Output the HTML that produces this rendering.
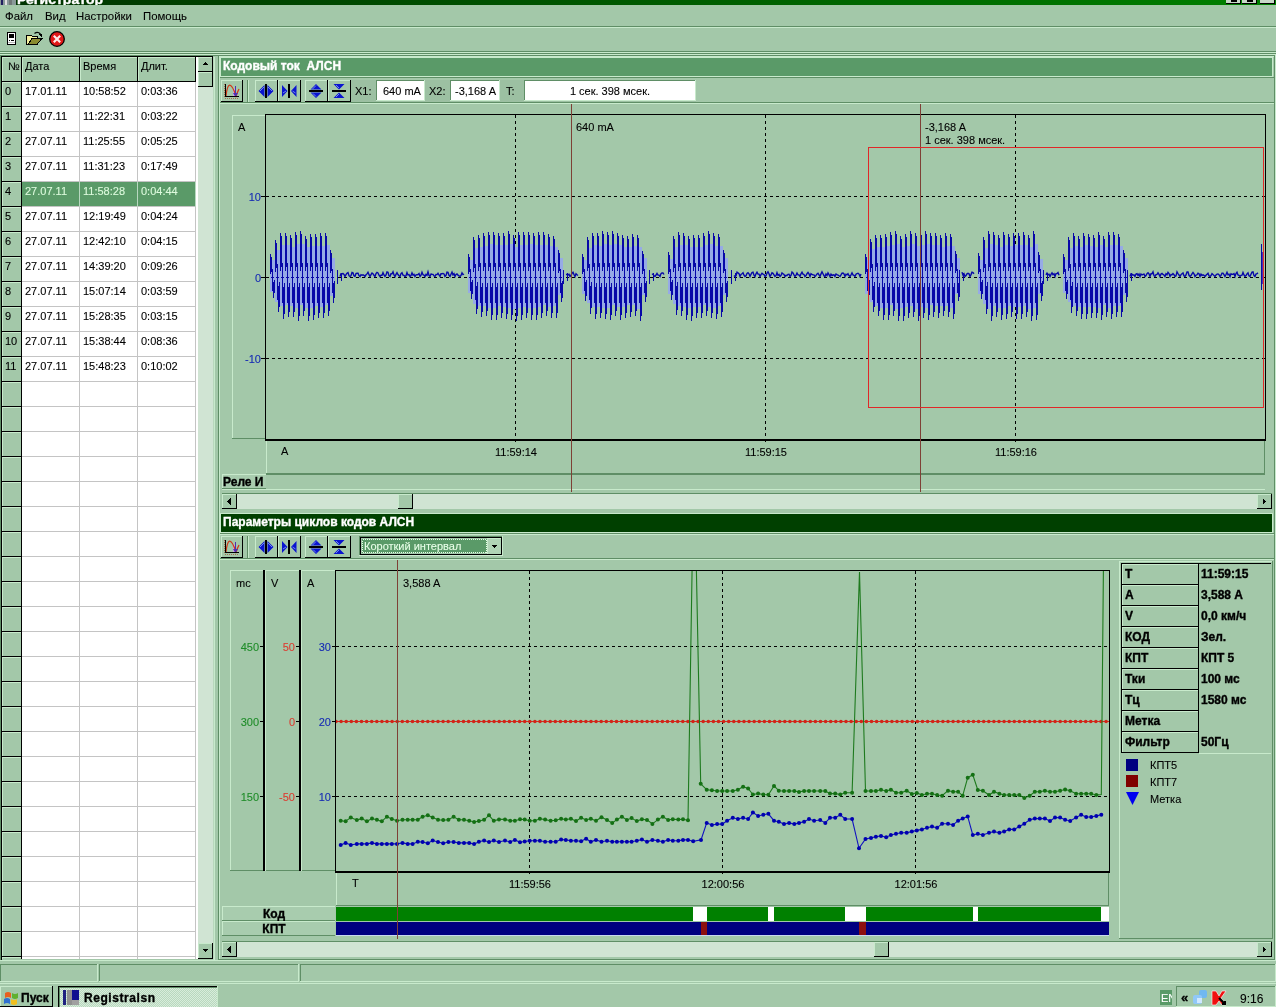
<!DOCTYPE html><html><head><meta charset="utf-8"><style>html,body{margin:0;padding:0;background:#A3C8A9;overflow:hidden}svg{display:block;will-change:transform}text{font-family:"Liberation Sans",sans-serif;white-space:pre}</style></head><body><svg width="1276" height="1007" viewBox="0 0 1276 1007" shape-rendering="crispEdges"><rect x="0" y="0" width="1276" height="1007" fill="#A3C8A9"/>
<defs><linearGradient id="tg" x1="0" x2="1" y1="0" y2="0"><stop offset="0" stop-color="#003400"/><stop offset="1" stop-color="#008000"/></linearGradient></defs>
<rect x="0" y="0" width="1276" height="5" fill="url(#tg)"/>
<svg x="0" y="0" width="1276" height="5" overflow="hidden">
<text x="17" y="3.5" font-size="13" font-weight="700" fill="#fff" stroke="#fff" stroke-width="0.35" text-anchor="start" textLength="86" lengthAdjust="spacingAndGlyphs">Регистратор</text>
</svg>
<rect x="0" y="0" width="16" height="5" fill="#8a9a9a"/>
<rect x="1" y="0" width="2" height="5" fill="#202060"/>
<rect x="5" y="0" width="2" height="5" fill="#e0e0e0"/>
<rect x="9" y="0" width="3" height="5" fill="#707878"/>
<rect x="1226" y="0" width="15" height="3" fill="#C8D8C8"/>
<rect x="1226" y="3" width="15" height="1" fill="#000"/>
<rect x="1240" y="0" width="1" height="4" fill="#000"/>
<rect x="1242" y="0" width="15" height="3" fill="#C8D8C8"/>
<rect x="1242" y="3" width="15" height="1" fill="#000"/>
<rect x="1256" y="0" width="1" height="4" fill="#000"/>
<rect x="1260" y="0" width="15" height="3" fill="#C8D8C8"/>
<rect x="1260" y="3" width="15" height="1" fill="#000"/>
<rect x="1274" y="0" width="1" height="4" fill="#000"/>
<rect x="1231" y="0" width="6" height="2" fill="#000"/>
<rect x="1247" y="0" width="6" height="2" fill="#000"/>
<text x="5" y="20" font-size="11.4" font-weight="400" fill="#000" stroke="#000" stroke-width="0.1" text-anchor="start" >Файл</text>
<text x="45" y="20" font-size="11.4" font-weight="400" fill="#000" stroke="#000" stroke-width="0.1" text-anchor="start" >Вид</text>
<text x="76" y="20" font-size="11.4" font-weight="400" fill="#000" stroke="#000" stroke-width="0.1" text-anchor="start" >Настройки</text>
<text x="143" y="20" font-size="11.4" font-weight="400" fill="#000" stroke="#000" stroke-width="0.1" text-anchor="start" >Помощь</text>
<rect x="0" y="26" width="1276" height="1" fill="#5F8E66"/>
<rect x="0" y="27" width="1276" height="1" fill="#C8EACC"/>
<rect x="7" y="32" width="9" height="13" fill="#000"/>
<rect x="8" y="33" width="7" height="11" fill="#fff"/>
<rect x="9" y="34" width="5" height="4" fill="#000"/>
<rect x="9" y="40" width="1" height="1" fill="#000"/>
<rect x="11" y="40" width="3" height="1" fill="#000"/>
<rect x="8" y="42" width="7" height="1" fill="#bbb"/>
<path d="M26.5 35.5 h5 l1 1 h5 v2 h4 l-5 6 h-10 z" fill="#F4F0A0" stroke="#000" stroke-width="1"/>
<path d="M28 44.5 l4 -6 h10 l-5 6 z" fill="#8A8A30" stroke="#000" stroke-width="1"/>
<path d="M34.5 33.5 q3 -2.5 6 0.5" fill="none" stroke="#000" stroke-width="1.2" shape-rendering="auto"/><path d="M38.5 34 h3.5 v3 z" fill="#000"/>
<circle cx="57" cy="39" r="7.3" fill="#E01818" stroke="#000" stroke-width="1.3" shape-rendering="auto"/>
<path d="M53.8 35.8 l6.4 6.4 M60.2 35.8 l-6.4 6.4" stroke="#FFE8E8" stroke-width="2.2" shape-rendering="auto"/>
<rect x="0" y="51" width="1276" height="1" fill="#5F8E66"/>
<rect x="0" y="52" width="1276" height="1" fill="#C8EACC"/>
<rect x="0" y="53" width="215" height="907" fill="#A3C8A9"/>
<rect x="0" y="53" width="1" height="907" fill="#5F8E66"/>
<rect x="1" y="56" width="212" height="1" fill="#000"/>
<rect x="1" y="56" width="1" height="904" fill="#000"/>
<rect x="2" y="57" width="20" height="25" fill="#A3C8A9"/>
<rect x="2" y="57" width="19" height="1" fill="#C8EACC"/>
<rect x="2" y="57" width="1" height="24" fill="#C8EACC"/>
<rect x="21" y="57" width="1" height="25" fill="#000"/>
<rect x="22" y="57" width="58" height="25" fill="#A3C8A9"/>
<rect x="22" y="57" width="57" height="1" fill="#C8EACC"/>
<rect x="22" y="57" width="1" height="24" fill="#C8EACC"/>
<rect x="79" y="57" width="1" height="25" fill="#000"/>
<rect x="80" y="57" width="58" height="25" fill="#A3C8A9"/>
<rect x="80" y="57" width="57" height="1" fill="#C8EACC"/>
<rect x="80" y="57" width="1" height="24" fill="#C8EACC"/>
<rect x="137" y="57" width="1" height="25" fill="#000"/>
<rect x="138" y="57" width="58" height="25" fill="#A3C8A9"/>
<rect x="138" y="57" width="57" height="1" fill="#C8EACC"/>
<rect x="138" y="57" width="1" height="24" fill="#C8EACC"/>
<rect x="195" y="57" width="1" height="25" fill="#000"/>
<rect x="2" y="81" width="194" height="1" fill="#000"/>
<text x="8" y="70" font-size="11" font-weight="400" fill="#000" stroke="#000" stroke-width="0.1" text-anchor="start" >№</text>
<text x="25" y="70" font-size="11" font-weight="400" fill="#000" stroke="#000" stroke-width="0.1" text-anchor="start" >Дата</text>
<text x="83" y="70" font-size="11" font-weight="400" fill="#000" stroke="#000" stroke-width="0.1" text-anchor="start" >Время</text>
<text x="141" y="70" font-size="11" font-weight="400" fill="#000" stroke="#000" stroke-width="0.1" text-anchor="start" >Длит.</text>
<rect x="22" y="82" width="174" height="877" fill="#fff"/>
<rect x="2" y="82" width="19" height="25" fill="#A3C8A9"/>
<rect x="2" y="82" width="19" height="1" fill="#C8EACC"/>
<rect x="2" y="82" width="1" height="25" fill="#C8EACC"/>
<rect x="21" y="82" width="1" height="25" fill="#000"/>
<rect x="2" y="106" width="20" height="1" fill="#000"/>
<rect x="22" y="106" width="174" height="1" fill="#C4C4C4"/>
<rect x="79" y="82" width="1" height="25" fill="#C4C4C4"/>
<rect x="137" y="82" width="1" height="25" fill="#C4C4C4"/>
<rect x="195" y="82" width="1" height="25" fill="#C4C4C4"/>
<text x="5" y="95" font-size="11" font-weight="400" fill="#000" stroke="#000" stroke-width="0.1" text-anchor="start" >0</text>
<text x="25" y="95" font-size="11" font-weight="400" fill="#000" stroke="#000" stroke-width="0.1" text-anchor="start" >17.01.11</text>
<text x="83" y="95" font-size="11" font-weight="400" fill="#000" stroke="#000" stroke-width="0.1" text-anchor="start" >10:58:52</text>
<text x="141" y="95" font-size="11" font-weight="400" fill="#000" stroke="#000" stroke-width="0.1" text-anchor="start" >0:03:36</text>
<rect x="2" y="107" width="19" height="25" fill="#A3C8A9"/>
<rect x="2" y="107" width="19" height="1" fill="#C8EACC"/>
<rect x="2" y="107" width="1" height="25" fill="#C8EACC"/>
<rect x="21" y="107" width="1" height="25" fill="#000"/>
<rect x="2" y="131" width="20" height="1" fill="#000"/>
<rect x="22" y="131" width="174" height="1" fill="#C4C4C4"/>
<rect x="79" y="107" width="1" height="25" fill="#C4C4C4"/>
<rect x="137" y="107" width="1" height="25" fill="#C4C4C4"/>
<rect x="195" y="107" width="1" height="25" fill="#C4C4C4"/>
<text x="5" y="120" font-size="11" font-weight="400" fill="#000" stroke="#000" stroke-width="0.1" text-anchor="start" >1</text>
<text x="25" y="120" font-size="11" font-weight="400" fill="#000" stroke="#000" stroke-width="0.1" text-anchor="start" >27.07.11</text>
<text x="83" y="120" font-size="11" font-weight="400" fill="#000" stroke="#000" stroke-width="0.1" text-anchor="start" >11:22:31</text>
<text x="141" y="120" font-size="11" font-weight="400" fill="#000" stroke="#000" stroke-width="0.1" text-anchor="start" >0:03:22</text>
<rect x="2" y="132" width="19" height="25" fill="#A3C8A9"/>
<rect x="2" y="132" width="19" height="1" fill="#C8EACC"/>
<rect x="2" y="132" width="1" height="25" fill="#C8EACC"/>
<rect x="21" y="132" width="1" height="25" fill="#000"/>
<rect x="2" y="156" width="20" height="1" fill="#000"/>
<rect x="22" y="156" width="174" height="1" fill="#C4C4C4"/>
<rect x="79" y="132" width="1" height="25" fill="#C4C4C4"/>
<rect x="137" y="132" width="1" height="25" fill="#C4C4C4"/>
<rect x="195" y="132" width="1" height="25" fill="#C4C4C4"/>
<text x="5" y="145" font-size="11" font-weight="400" fill="#000" stroke="#000" stroke-width="0.1" text-anchor="start" >2</text>
<text x="25" y="145" font-size="11" font-weight="400" fill="#000" stroke="#000" stroke-width="0.1" text-anchor="start" >27.07.11</text>
<text x="83" y="145" font-size="11" font-weight="400" fill="#000" stroke="#000" stroke-width="0.1" text-anchor="start" >11:25:55</text>
<text x="141" y="145" font-size="11" font-weight="400" fill="#000" stroke="#000" stroke-width="0.1" text-anchor="start" >0:05:25</text>
<rect x="2" y="157" width="19" height="25" fill="#A3C8A9"/>
<rect x="2" y="157" width="19" height="1" fill="#C8EACC"/>
<rect x="2" y="157" width="1" height="25" fill="#C8EACC"/>
<rect x="21" y="157" width="1" height="25" fill="#000"/>
<rect x="2" y="181" width="20" height="1" fill="#000"/>
<rect x="22" y="181" width="174" height="1" fill="#C4C4C4"/>
<rect x="79" y="157" width="1" height="25" fill="#C4C4C4"/>
<rect x="137" y="157" width="1" height="25" fill="#C4C4C4"/>
<rect x="195" y="157" width="1" height="25" fill="#C4C4C4"/>
<text x="5" y="170" font-size="11" font-weight="400" fill="#000" stroke="#000" stroke-width="0.1" text-anchor="start" >3</text>
<text x="25" y="170" font-size="11" font-weight="400" fill="#000" stroke="#000" stroke-width="0.1" text-anchor="start" >27.07.11</text>
<text x="83" y="170" font-size="11" font-weight="400" fill="#000" stroke="#000" stroke-width="0.1" text-anchor="start" >11:31:23</text>
<text x="141" y="170" font-size="11" font-weight="400" fill="#000" stroke="#000" stroke-width="0.1" text-anchor="start" >0:17:49</text>
<rect x="2" y="182" width="19" height="25" fill="#A3C8A9"/>
<rect x="2" y="182" width="19" height="1" fill="#C8EACC"/>
<rect x="2" y="182" width="1" height="25" fill="#C8EACC"/>
<rect x="21" y="182" width="1" height="25" fill="#000"/>
<rect x="2" y="206" width="20" height="1" fill="#000"/>
<rect x="22" y="182" width="174" height="24" fill="#5A9A68"/>
<rect x="22" y="206" width="174" height="1" fill="#C4C4C4"/>
<rect x="79" y="182" width="1" height="25" fill="#B8D8C0"/>
<rect x="137" y="182" width="1" height="25" fill="#B8D8C0"/>
<rect x="195" y="182" width="1" height="25" fill="#B8D8C0"/>
<text x="5" y="195" font-size="11" font-weight="400" fill="#000" stroke="#000" stroke-width="0.1" text-anchor="start" >4</text>
<text x="25" y="195" font-size="11" font-weight="400" fill="#DDFADD" stroke="#DDFADD" stroke-width="0.1" text-anchor="start" >27.07.11</text>
<text x="83" y="195" font-size="11" font-weight="400" fill="#DDFADD" stroke="#DDFADD" stroke-width="0.1" text-anchor="start" >11:58:28</text>
<text x="141" y="195" font-size="11" font-weight="400" fill="#DDFADD" stroke="#DDFADD" stroke-width="0.1" text-anchor="start" >0:04:44</text>
<rect x="2" y="207" width="19" height="25" fill="#A3C8A9"/>
<rect x="2" y="207" width="19" height="1" fill="#C8EACC"/>
<rect x="2" y="207" width="1" height="25" fill="#C8EACC"/>
<rect x="21" y="207" width="1" height="25" fill="#000"/>
<rect x="2" y="231" width="20" height="1" fill="#000"/>
<rect x="22" y="231" width="174" height="1" fill="#C4C4C4"/>
<rect x="79" y="207" width="1" height="25" fill="#C4C4C4"/>
<rect x="137" y="207" width="1" height="25" fill="#C4C4C4"/>
<rect x="195" y="207" width="1" height="25" fill="#C4C4C4"/>
<text x="5" y="220" font-size="11" font-weight="400" fill="#000" stroke="#000" stroke-width="0.1" text-anchor="start" >5</text>
<text x="25" y="220" font-size="11" font-weight="400" fill="#000" stroke="#000" stroke-width="0.1" text-anchor="start" >27.07.11</text>
<text x="83" y="220" font-size="11" font-weight="400" fill="#000" stroke="#000" stroke-width="0.1" text-anchor="start" >12:19:49</text>
<text x="141" y="220" font-size="11" font-weight="400" fill="#000" stroke="#000" stroke-width="0.1" text-anchor="start" >0:04:24</text>
<rect x="2" y="232" width="19" height="25" fill="#A3C8A9"/>
<rect x="2" y="232" width="19" height="1" fill="#C8EACC"/>
<rect x="2" y="232" width="1" height="25" fill="#C8EACC"/>
<rect x="21" y="232" width="1" height="25" fill="#000"/>
<rect x="2" y="256" width="20" height="1" fill="#000"/>
<rect x="22" y="256" width="174" height="1" fill="#C4C4C4"/>
<rect x="79" y="232" width="1" height="25" fill="#C4C4C4"/>
<rect x="137" y="232" width="1" height="25" fill="#C4C4C4"/>
<rect x="195" y="232" width="1" height="25" fill="#C4C4C4"/>
<text x="5" y="245" font-size="11" font-weight="400" fill="#000" stroke="#000" stroke-width="0.1" text-anchor="start" >6</text>
<text x="25" y="245" font-size="11" font-weight="400" fill="#000" stroke="#000" stroke-width="0.1" text-anchor="start" >27.07.11</text>
<text x="83" y="245" font-size="11" font-weight="400" fill="#000" stroke="#000" stroke-width="0.1" text-anchor="start" >12:42:10</text>
<text x="141" y="245" font-size="11" font-weight="400" fill="#000" stroke="#000" stroke-width="0.1" text-anchor="start" >0:04:15</text>
<rect x="2" y="257" width="19" height="25" fill="#A3C8A9"/>
<rect x="2" y="257" width="19" height="1" fill="#C8EACC"/>
<rect x="2" y="257" width="1" height="25" fill="#C8EACC"/>
<rect x="21" y="257" width="1" height="25" fill="#000"/>
<rect x="2" y="281" width="20" height="1" fill="#000"/>
<rect x="22" y="281" width="174" height="1" fill="#C4C4C4"/>
<rect x="79" y="257" width="1" height="25" fill="#C4C4C4"/>
<rect x="137" y="257" width="1" height="25" fill="#C4C4C4"/>
<rect x="195" y="257" width="1" height="25" fill="#C4C4C4"/>
<text x="5" y="270" font-size="11" font-weight="400" fill="#000" stroke="#000" stroke-width="0.1" text-anchor="start" >7</text>
<text x="25" y="270" font-size="11" font-weight="400" fill="#000" stroke="#000" stroke-width="0.1" text-anchor="start" >27.07.11</text>
<text x="83" y="270" font-size="11" font-weight="400" fill="#000" stroke="#000" stroke-width="0.1" text-anchor="start" >14:39:20</text>
<text x="141" y="270" font-size="11" font-weight="400" fill="#000" stroke="#000" stroke-width="0.1" text-anchor="start" >0:09:26</text>
<rect x="2" y="282" width="19" height="25" fill="#A3C8A9"/>
<rect x="2" y="282" width="19" height="1" fill="#C8EACC"/>
<rect x="2" y="282" width="1" height="25" fill="#C8EACC"/>
<rect x="21" y="282" width="1" height="25" fill="#000"/>
<rect x="2" y="306" width="20" height="1" fill="#000"/>
<rect x="22" y="306" width="174" height="1" fill="#C4C4C4"/>
<rect x="79" y="282" width="1" height="25" fill="#C4C4C4"/>
<rect x="137" y="282" width="1" height="25" fill="#C4C4C4"/>
<rect x="195" y="282" width="1" height="25" fill="#C4C4C4"/>
<text x="5" y="295" font-size="11" font-weight="400" fill="#000" stroke="#000" stroke-width="0.1" text-anchor="start" >8</text>
<text x="25" y="295" font-size="11" font-weight="400" fill="#000" stroke="#000" stroke-width="0.1" text-anchor="start" >27.07.11</text>
<text x="83" y="295" font-size="11" font-weight="400" fill="#000" stroke="#000" stroke-width="0.1" text-anchor="start" >15:07:14</text>
<text x="141" y="295" font-size="11" font-weight="400" fill="#000" stroke="#000" stroke-width="0.1" text-anchor="start" >0:03:59</text>
<rect x="2" y="307" width="19" height="25" fill="#A3C8A9"/>
<rect x="2" y="307" width="19" height="1" fill="#C8EACC"/>
<rect x="2" y="307" width="1" height="25" fill="#C8EACC"/>
<rect x="21" y="307" width="1" height="25" fill="#000"/>
<rect x="2" y="331" width="20" height="1" fill="#000"/>
<rect x="22" y="331" width="174" height="1" fill="#C4C4C4"/>
<rect x="79" y="307" width="1" height="25" fill="#C4C4C4"/>
<rect x="137" y="307" width="1" height="25" fill="#C4C4C4"/>
<rect x="195" y="307" width="1" height="25" fill="#C4C4C4"/>
<text x="5" y="320" font-size="11" font-weight="400" fill="#000" stroke="#000" stroke-width="0.1" text-anchor="start" >9</text>
<text x="25" y="320" font-size="11" font-weight="400" fill="#000" stroke="#000" stroke-width="0.1" text-anchor="start" >27.07.11</text>
<text x="83" y="320" font-size="11" font-weight="400" fill="#000" stroke="#000" stroke-width="0.1" text-anchor="start" >15:28:35</text>
<text x="141" y="320" font-size="11" font-weight="400" fill="#000" stroke="#000" stroke-width="0.1" text-anchor="start" >0:03:15</text>
<rect x="2" y="332" width="19" height="25" fill="#A3C8A9"/>
<rect x="2" y="332" width="19" height="1" fill="#C8EACC"/>
<rect x="2" y="332" width="1" height="25" fill="#C8EACC"/>
<rect x="21" y="332" width="1" height="25" fill="#000"/>
<rect x="2" y="356" width="20" height="1" fill="#000"/>
<rect x="22" y="356" width="174" height="1" fill="#C4C4C4"/>
<rect x="79" y="332" width="1" height="25" fill="#C4C4C4"/>
<rect x="137" y="332" width="1" height="25" fill="#C4C4C4"/>
<rect x="195" y="332" width="1" height="25" fill="#C4C4C4"/>
<text x="5" y="345" font-size="11" font-weight="400" fill="#000" stroke="#000" stroke-width="0.1" text-anchor="start" >10</text>
<text x="25" y="345" font-size="11" font-weight="400" fill="#000" stroke="#000" stroke-width="0.1" text-anchor="start" >27.07.11</text>
<text x="83" y="345" font-size="11" font-weight="400" fill="#000" stroke="#000" stroke-width="0.1" text-anchor="start" >15:38:44</text>
<text x="141" y="345" font-size="11" font-weight="400" fill="#000" stroke="#000" stroke-width="0.1" text-anchor="start" >0:08:36</text>
<rect x="2" y="357" width="19" height="25" fill="#A3C8A9"/>
<rect x="2" y="357" width="19" height="1" fill="#C8EACC"/>
<rect x="2" y="357" width="1" height="25" fill="#C8EACC"/>
<rect x="21" y="357" width="1" height="25" fill="#000"/>
<rect x="2" y="381" width="20" height="1" fill="#000"/>
<rect x="22" y="381" width="174" height="1" fill="#C4C4C4"/>
<rect x="79" y="357" width="1" height="25" fill="#C4C4C4"/>
<rect x="137" y="357" width="1" height="25" fill="#C4C4C4"/>
<rect x="195" y="357" width="1" height="25" fill="#C4C4C4"/>
<text x="5" y="370" font-size="11" font-weight="400" fill="#000" stroke="#000" stroke-width="0.1" text-anchor="start" >11</text>
<text x="25" y="370" font-size="11" font-weight="400" fill="#000" stroke="#000" stroke-width="0.1" text-anchor="start" >27.07.11</text>
<text x="83" y="370" font-size="11" font-weight="400" fill="#000" stroke="#000" stroke-width="0.1" text-anchor="start" >15:48:23</text>
<text x="141" y="370" font-size="11" font-weight="400" fill="#000" stroke="#000" stroke-width="0.1" text-anchor="start" >0:10:02</text>
<rect x="2" y="382" width="19" height="25" fill="#A3C8A9"/>
<rect x="2" y="382" width="19" height="1" fill="#C8EACC"/>
<rect x="2" y="382" width="1" height="25" fill="#C8EACC"/>
<rect x="21" y="382" width="1" height="25" fill="#000"/>
<rect x="2" y="406" width="20" height="1" fill="#000"/>
<rect x="22" y="406" width="174" height="1" fill="#C4C4C4"/>
<rect x="79" y="382" width="1" height="25" fill="#C4C4C4"/>
<rect x="137" y="382" width="1" height="25" fill="#C4C4C4"/>
<rect x="195" y="382" width="1" height="25" fill="#C4C4C4"/>
<rect x="2" y="407" width="19" height="25" fill="#A3C8A9"/>
<rect x="2" y="407" width="19" height="1" fill="#C8EACC"/>
<rect x="2" y="407" width="1" height="25" fill="#C8EACC"/>
<rect x="21" y="407" width="1" height="25" fill="#000"/>
<rect x="2" y="431" width="20" height="1" fill="#000"/>
<rect x="22" y="431" width="174" height="1" fill="#C4C4C4"/>
<rect x="79" y="407" width="1" height="25" fill="#C4C4C4"/>
<rect x="137" y="407" width="1" height="25" fill="#C4C4C4"/>
<rect x="195" y="407" width="1" height="25" fill="#C4C4C4"/>
<rect x="2" y="432" width="19" height="25" fill="#A3C8A9"/>
<rect x="2" y="432" width="19" height="1" fill="#C8EACC"/>
<rect x="2" y="432" width="1" height="25" fill="#C8EACC"/>
<rect x="21" y="432" width="1" height="25" fill="#000"/>
<rect x="2" y="456" width="20" height="1" fill="#000"/>
<rect x="22" y="456" width="174" height="1" fill="#C4C4C4"/>
<rect x="79" y="432" width="1" height="25" fill="#C4C4C4"/>
<rect x="137" y="432" width="1" height="25" fill="#C4C4C4"/>
<rect x="195" y="432" width="1" height="25" fill="#C4C4C4"/>
<rect x="2" y="457" width="19" height="25" fill="#A3C8A9"/>
<rect x="2" y="457" width="19" height="1" fill="#C8EACC"/>
<rect x="2" y="457" width="1" height="25" fill="#C8EACC"/>
<rect x="21" y="457" width="1" height="25" fill="#000"/>
<rect x="2" y="481" width="20" height="1" fill="#000"/>
<rect x="22" y="481" width="174" height="1" fill="#C4C4C4"/>
<rect x="79" y="457" width="1" height="25" fill="#C4C4C4"/>
<rect x="137" y="457" width="1" height="25" fill="#C4C4C4"/>
<rect x="195" y="457" width="1" height="25" fill="#C4C4C4"/>
<rect x="2" y="482" width="19" height="25" fill="#A3C8A9"/>
<rect x="2" y="482" width="19" height="1" fill="#C8EACC"/>
<rect x="2" y="482" width="1" height="25" fill="#C8EACC"/>
<rect x="21" y="482" width="1" height="25" fill="#000"/>
<rect x="2" y="506" width="20" height="1" fill="#000"/>
<rect x="22" y="506" width="174" height="1" fill="#C4C4C4"/>
<rect x="79" y="482" width="1" height="25" fill="#C4C4C4"/>
<rect x="137" y="482" width="1" height="25" fill="#C4C4C4"/>
<rect x="195" y="482" width="1" height="25" fill="#C4C4C4"/>
<rect x="2" y="507" width="19" height="25" fill="#A3C8A9"/>
<rect x="2" y="507" width="19" height="1" fill="#C8EACC"/>
<rect x="2" y="507" width="1" height="25" fill="#C8EACC"/>
<rect x="21" y="507" width="1" height="25" fill="#000"/>
<rect x="2" y="531" width="20" height="1" fill="#000"/>
<rect x="22" y="531" width="174" height="1" fill="#C4C4C4"/>
<rect x="79" y="507" width="1" height="25" fill="#C4C4C4"/>
<rect x="137" y="507" width="1" height="25" fill="#C4C4C4"/>
<rect x="195" y="507" width="1" height="25" fill="#C4C4C4"/>
<rect x="2" y="532" width="19" height="25" fill="#A3C8A9"/>
<rect x="2" y="532" width="19" height="1" fill="#C8EACC"/>
<rect x="2" y="532" width="1" height="25" fill="#C8EACC"/>
<rect x="21" y="532" width="1" height="25" fill="#000"/>
<rect x="2" y="556" width="20" height="1" fill="#000"/>
<rect x="22" y="556" width="174" height="1" fill="#C4C4C4"/>
<rect x="79" y="532" width="1" height="25" fill="#C4C4C4"/>
<rect x="137" y="532" width="1" height="25" fill="#C4C4C4"/>
<rect x="195" y="532" width="1" height="25" fill="#C4C4C4"/>
<rect x="2" y="557" width="19" height="25" fill="#A3C8A9"/>
<rect x="2" y="557" width="19" height="1" fill="#C8EACC"/>
<rect x="2" y="557" width="1" height="25" fill="#C8EACC"/>
<rect x="21" y="557" width="1" height="25" fill="#000"/>
<rect x="2" y="581" width="20" height="1" fill="#000"/>
<rect x="22" y="581" width="174" height="1" fill="#C4C4C4"/>
<rect x="79" y="557" width="1" height="25" fill="#C4C4C4"/>
<rect x="137" y="557" width="1" height="25" fill="#C4C4C4"/>
<rect x="195" y="557" width="1" height="25" fill="#C4C4C4"/>
<rect x="2" y="582" width="19" height="25" fill="#A3C8A9"/>
<rect x="2" y="582" width="19" height="1" fill="#C8EACC"/>
<rect x="2" y="582" width="1" height="25" fill="#C8EACC"/>
<rect x="21" y="582" width="1" height="25" fill="#000"/>
<rect x="2" y="606" width="20" height="1" fill="#000"/>
<rect x="22" y="606" width="174" height="1" fill="#C4C4C4"/>
<rect x="79" y="582" width="1" height="25" fill="#C4C4C4"/>
<rect x="137" y="582" width="1" height="25" fill="#C4C4C4"/>
<rect x="195" y="582" width="1" height="25" fill="#C4C4C4"/>
<rect x="2" y="607" width="19" height="25" fill="#A3C8A9"/>
<rect x="2" y="607" width="19" height="1" fill="#C8EACC"/>
<rect x="2" y="607" width="1" height="25" fill="#C8EACC"/>
<rect x="21" y="607" width="1" height="25" fill="#000"/>
<rect x="2" y="631" width="20" height="1" fill="#000"/>
<rect x="22" y="631" width="174" height="1" fill="#C4C4C4"/>
<rect x="79" y="607" width="1" height="25" fill="#C4C4C4"/>
<rect x="137" y="607" width="1" height="25" fill="#C4C4C4"/>
<rect x="195" y="607" width="1" height="25" fill="#C4C4C4"/>
<rect x="2" y="632" width="19" height="25" fill="#A3C8A9"/>
<rect x="2" y="632" width="19" height="1" fill="#C8EACC"/>
<rect x="2" y="632" width="1" height="25" fill="#C8EACC"/>
<rect x="21" y="632" width="1" height="25" fill="#000"/>
<rect x="2" y="656" width="20" height="1" fill="#000"/>
<rect x="22" y="656" width="174" height="1" fill="#C4C4C4"/>
<rect x="79" y="632" width="1" height="25" fill="#C4C4C4"/>
<rect x="137" y="632" width="1" height="25" fill="#C4C4C4"/>
<rect x="195" y="632" width="1" height="25" fill="#C4C4C4"/>
<rect x="2" y="657" width="19" height="25" fill="#A3C8A9"/>
<rect x="2" y="657" width="19" height="1" fill="#C8EACC"/>
<rect x="2" y="657" width="1" height="25" fill="#C8EACC"/>
<rect x="21" y="657" width="1" height="25" fill="#000"/>
<rect x="2" y="681" width="20" height="1" fill="#000"/>
<rect x="22" y="681" width="174" height="1" fill="#C4C4C4"/>
<rect x="79" y="657" width="1" height="25" fill="#C4C4C4"/>
<rect x="137" y="657" width="1" height="25" fill="#C4C4C4"/>
<rect x="195" y="657" width="1" height="25" fill="#C4C4C4"/>
<rect x="2" y="682" width="19" height="25" fill="#A3C8A9"/>
<rect x="2" y="682" width="19" height="1" fill="#C8EACC"/>
<rect x="2" y="682" width="1" height="25" fill="#C8EACC"/>
<rect x="21" y="682" width="1" height="25" fill="#000"/>
<rect x="2" y="706" width="20" height="1" fill="#000"/>
<rect x="22" y="706" width="174" height="1" fill="#C4C4C4"/>
<rect x="79" y="682" width="1" height="25" fill="#C4C4C4"/>
<rect x="137" y="682" width="1" height="25" fill="#C4C4C4"/>
<rect x="195" y="682" width="1" height="25" fill="#C4C4C4"/>
<rect x="2" y="707" width="19" height="25" fill="#A3C8A9"/>
<rect x="2" y="707" width="19" height="1" fill="#C8EACC"/>
<rect x="2" y="707" width="1" height="25" fill="#C8EACC"/>
<rect x="21" y="707" width="1" height="25" fill="#000"/>
<rect x="2" y="731" width="20" height="1" fill="#000"/>
<rect x="22" y="731" width="174" height="1" fill="#C4C4C4"/>
<rect x="79" y="707" width="1" height="25" fill="#C4C4C4"/>
<rect x="137" y="707" width="1" height="25" fill="#C4C4C4"/>
<rect x="195" y="707" width="1" height="25" fill="#C4C4C4"/>
<rect x="2" y="732" width="19" height="25" fill="#A3C8A9"/>
<rect x="2" y="732" width="19" height="1" fill="#C8EACC"/>
<rect x="2" y="732" width="1" height="25" fill="#C8EACC"/>
<rect x="21" y="732" width="1" height="25" fill="#000"/>
<rect x="2" y="756" width="20" height="1" fill="#000"/>
<rect x="22" y="756" width="174" height="1" fill="#C4C4C4"/>
<rect x="79" y="732" width="1" height="25" fill="#C4C4C4"/>
<rect x="137" y="732" width="1" height="25" fill="#C4C4C4"/>
<rect x="195" y="732" width="1" height="25" fill="#C4C4C4"/>
<rect x="2" y="757" width="19" height="25" fill="#A3C8A9"/>
<rect x="2" y="757" width="19" height="1" fill="#C8EACC"/>
<rect x="2" y="757" width="1" height="25" fill="#C8EACC"/>
<rect x="21" y="757" width="1" height="25" fill="#000"/>
<rect x="2" y="781" width="20" height="1" fill="#000"/>
<rect x="22" y="781" width="174" height="1" fill="#C4C4C4"/>
<rect x="79" y="757" width="1" height="25" fill="#C4C4C4"/>
<rect x="137" y="757" width="1" height="25" fill="#C4C4C4"/>
<rect x="195" y="757" width="1" height="25" fill="#C4C4C4"/>
<rect x="2" y="782" width="19" height="25" fill="#A3C8A9"/>
<rect x="2" y="782" width="19" height="1" fill="#C8EACC"/>
<rect x="2" y="782" width="1" height="25" fill="#C8EACC"/>
<rect x="21" y="782" width="1" height="25" fill="#000"/>
<rect x="2" y="806" width="20" height="1" fill="#000"/>
<rect x="22" y="806" width="174" height="1" fill="#C4C4C4"/>
<rect x="79" y="782" width="1" height="25" fill="#C4C4C4"/>
<rect x="137" y="782" width="1" height="25" fill="#C4C4C4"/>
<rect x="195" y="782" width="1" height="25" fill="#C4C4C4"/>
<rect x="2" y="807" width="19" height="25" fill="#A3C8A9"/>
<rect x="2" y="807" width="19" height="1" fill="#C8EACC"/>
<rect x="2" y="807" width="1" height="25" fill="#C8EACC"/>
<rect x="21" y="807" width="1" height="25" fill="#000"/>
<rect x="2" y="831" width="20" height="1" fill="#000"/>
<rect x="22" y="831" width="174" height="1" fill="#C4C4C4"/>
<rect x="79" y="807" width="1" height="25" fill="#C4C4C4"/>
<rect x="137" y="807" width="1" height="25" fill="#C4C4C4"/>
<rect x="195" y="807" width="1" height="25" fill="#C4C4C4"/>
<rect x="2" y="832" width="19" height="25" fill="#A3C8A9"/>
<rect x="2" y="832" width="19" height="1" fill="#C8EACC"/>
<rect x="2" y="832" width="1" height="25" fill="#C8EACC"/>
<rect x="21" y="832" width="1" height="25" fill="#000"/>
<rect x="2" y="856" width="20" height="1" fill="#000"/>
<rect x="22" y="856" width="174" height="1" fill="#C4C4C4"/>
<rect x="79" y="832" width="1" height="25" fill="#C4C4C4"/>
<rect x="137" y="832" width="1" height="25" fill="#C4C4C4"/>
<rect x="195" y="832" width="1" height="25" fill="#C4C4C4"/>
<rect x="2" y="857" width="19" height="25" fill="#A3C8A9"/>
<rect x="2" y="857" width="19" height="1" fill="#C8EACC"/>
<rect x="2" y="857" width="1" height="25" fill="#C8EACC"/>
<rect x="21" y="857" width="1" height="25" fill="#000"/>
<rect x="2" y="881" width="20" height="1" fill="#000"/>
<rect x="22" y="881" width="174" height="1" fill="#C4C4C4"/>
<rect x="79" y="857" width="1" height="25" fill="#C4C4C4"/>
<rect x="137" y="857" width="1" height="25" fill="#C4C4C4"/>
<rect x="195" y="857" width="1" height="25" fill="#C4C4C4"/>
<rect x="2" y="882" width="19" height="25" fill="#A3C8A9"/>
<rect x="2" y="882" width="19" height="1" fill="#C8EACC"/>
<rect x="2" y="882" width="1" height="25" fill="#C8EACC"/>
<rect x="21" y="882" width="1" height="25" fill="#000"/>
<rect x="2" y="906" width="20" height="1" fill="#000"/>
<rect x="22" y="906" width="174" height="1" fill="#C4C4C4"/>
<rect x="79" y="882" width="1" height="25" fill="#C4C4C4"/>
<rect x="137" y="882" width="1" height="25" fill="#C4C4C4"/>
<rect x="195" y="882" width="1" height="25" fill="#C4C4C4"/>
<rect x="2" y="907" width="19" height="25" fill="#A3C8A9"/>
<rect x="2" y="907" width="19" height="1" fill="#C8EACC"/>
<rect x="2" y="907" width="1" height="25" fill="#C8EACC"/>
<rect x="21" y="907" width="1" height="25" fill="#000"/>
<rect x="2" y="931" width="20" height="1" fill="#000"/>
<rect x="22" y="931" width="174" height="1" fill="#C4C4C4"/>
<rect x="79" y="907" width="1" height="25" fill="#C4C4C4"/>
<rect x="137" y="907" width="1" height="25" fill="#C4C4C4"/>
<rect x="195" y="907" width="1" height="25" fill="#C4C4C4"/>
<rect x="2" y="932" width="19" height="25" fill="#A3C8A9"/>
<rect x="2" y="932" width="19" height="1" fill="#C8EACC"/>
<rect x="2" y="932" width="1" height="25" fill="#C8EACC"/>
<rect x="21" y="932" width="1" height="25" fill="#000"/>
<rect x="2" y="956" width="20" height="1" fill="#000"/>
<rect x="22" y="956" width="174" height="1" fill="#C4C4C4"/>
<rect x="79" y="932" width="1" height="25" fill="#C4C4C4"/>
<rect x="137" y="932" width="1" height="25" fill="#C4C4C4"/>
<rect x="195" y="932" width="1" height="25" fill="#C4C4C4"/>
<rect x="2" y="957" width="19" height="2" fill="#A3C8A9"/>
<rect x="2" y="957" width="19" height="1" fill="#C8EACC"/>
<rect x="2" y="957" width="1" height="2" fill="#C8EACC"/>
<rect x="21" y="957" width="1" height="2" fill="#000"/>
<rect x="79" y="957" width="1" height="2" fill="#C4C4C4"/>
<rect x="137" y="957" width="1" height="2" fill="#C4C4C4"/>
<rect x="195" y="957" width="1" height="2" fill="#C4C4C4"/>
<rect x="196" y="57" width="2" height="902" fill="#fff"/>
<rect x="198" y="57" width="15" height="902" fill="#D0E4D3"/>
<rect x="198" y="57" width="15" height="15" fill="#A3C8A9"/>
<rect x="198" y="57" width="15" height="1" fill="#C8EACC"/>
<rect x="198" y="57" width="1" height="15" fill="#C8EACC"/>
<rect x="198" y="71" width="15" height="1" fill="#000"/>
<rect x="212" y="57" width="1" height="15" fill="#000"/>
<path d="M202.5 65 h6 l-3 -3 z" fill="#000"/>
<rect x="198" y="72" width="15" height="15" fill="#A3C8A9"/>
<rect x="198" y="72" width="15" height="1" fill="#C8EACC"/>
<rect x="198" y="72" width="1" height="15" fill="#C8EACC"/>
<rect x="198" y="86" width="15" height="1" fill="#000"/>
<rect x="212" y="72" width="1" height="15" fill="#000"/>
<rect x="198" y="943" width="15" height="16" fill="#A3C8A9"/>
<rect x="198" y="943" width="15" height="1" fill="#C8EACC"/>
<rect x="198" y="943" width="1" height="16" fill="#C8EACC"/>
<rect x="198" y="958" width="15" height="1" fill="#000"/>
<rect x="212" y="943" width="1" height="16" fill="#000"/>
<path d="M202.5 949 h6 l-3 3 z" fill="#000"/>
<rect x="213" y="53" width="5" height="907" fill="#A3C8A9"/>
<rect x="213" y="57" width="1" height="903" fill="#B8D8BC"/>
<rect x="214" y="57" width="1" height="903" fill="#C8EACC"/>
<rect x="0" y="53" width="1276" height="1" fill="#5F8E66"/>
<rect x="0" y="54" width="1276" height="1" fill="#C8EACC"/>
<rect x="0" y="55" width="1276" height="1" fill="#5F8E66"/>
<rect x="1" y="56" width="212" height="1" fill="#000"/>
<rect x="218" y="55" width="1" height="906" fill="#5F8E66"/>
<rect x="219" y="56" width="1" height="904" fill="#C8EACC"/>
<rect x="219" y="56" width="1056" height="1" fill="#C8EACC"/>
<rect x="1274" y="56" width="1" height="904" fill="#5F8E66"/>
<rect x="1275" y="55" width="1" height="906" fill="#C8EACC"/>
<rect x="219" y="959" width="1056" height="1" fill="#5F8E66"/>
<rect x="0" y="960" width="1276" height="1" fill="#C8EACC"/>
<rect x="220" y="57" width="1053" height="20" fill="#C8EACC"/>
<rect x="221" y="58" width="1051" height="18" fill="#5A9A68"/>
<text x="223" y="70" font-size="12" font-weight="700" fill="#fff" stroke="#fff" stroke-width="0.35" text-anchor="start" >Кодовый ток  АЛСН</text>
<rect x="220" y="77" width="1054" height="1" fill="#5F8E66"/>
<rect x="221" y="80" width="22" height="22" fill="#A3C8A9"/>
<rect x="221" y="80" width="22" height="1" fill="#C8EACC"/>
<rect x="221" y="80" width="1" height="22" fill="#C8EACC"/>
<rect x="221" y="101" width="22" height="1" fill="#000"/>
<rect x="242" y="80" width="1" height="22" fill="#000"/>
<path d="M224.5 84 v13 M225 98.5 h14" fill="none" stroke="#A07050" stroke-width="1" stroke-dasharray="1 1"/>
<path d="M233 90 l3 -3 v10 h-3 z" fill="#C8A8E0" shape-rendering="auto"/>
<path d="M226 96 C227.5 82 231 81 236 96 Q237.5 92 239 89" fill="none" stroke="#D03818" stroke-width="1.3" shape-rendering="auto"/>
<path d="M235.5 86 v10" fill="none" stroke="#5030B0" stroke-width="1.3"/><path d="M233 93 h5 l-2.5 4 z" fill="#5030B0" shape-rendering="auto"/>
<rect x="225" y="84" width="1" height="13" fill="#000"/>
<rect x="225" y="96" width="14" height="1" fill="#000"/>
<rect x="255" y="80" width="23" height="22" fill="#A3C8A9"/>
<rect x="255" y="80" width="23" height="1" fill="#C8EACC"/>
<rect x="255" y="80" width="1" height="22" fill="#C8EACC"/>
<rect x="255" y="101" width="23" height="1" fill="#000"/>
<rect x="277" y="80" width="1" height="22" fill="#000"/>
<rect x="278" y="80" width="23" height="22" fill="#A3C8A9"/>
<rect x="278" y="80" width="23" height="1" fill="#C8EACC"/>
<rect x="278" y="80" width="1" height="22" fill="#C8EACC"/>
<rect x="278" y="101" width="23" height="1" fill="#000"/>
<rect x="300" y="80" width="1" height="22" fill="#000"/>
<rect x="305" y="80" width="23" height="22" fill="#A3C8A9"/>
<rect x="305" y="80" width="23" height="1" fill="#C8EACC"/>
<rect x="305" y="80" width="1" height="22" fill="#C8EACC"/>
<rect x="305" y="101" width="23" height="1" fill="#000"/>
<rect x="327" y="80" width="1" height="22" fill="#000"/>
<rect x="328" y="80" width="23" height="22" fill="#A3C8A9"/>
<rect x="328" y="80" width="23" height="1" fill="#C8EACC"/>
<rect x="328" y="80" width="1" height="22" fill="#C8EACC"/>
<rect x="328" y="101" width="23" height="1" fill="#000"/>
<rect x="350" y="80" width="1" height="22" fill="#000"/>
<rect x="265" y="84" width="2" height="14" fill="#000"/>
<rect x="288" y="84" width="2" height="14" fill="#000"/>
<rect x="309" y="90" width="14" height="2" fill="#000"/>
<rect x="332" y="90" width="14" height="2" fill="#000"/>
<g shape-rendering="auto"><path d="M258.5 91 L264.5 85 V97 Z M273.5 91 L267.5 85 V97 Z" fill="#0A14D0"/><path d="M260 91 L264 87 M272 91 L268 87" stroke="#90A8F0" stroke-width="0.8"/><path d="M282 85 L287.5 91 L282 97 Z M296.5 85 L291 91 L296.5 97 Z" fill="#0A14D0"/><path d="M283 93 L286 91 M295.5 93 L292.5 91" stroke="#90A8F0" stroke-width="0.8"/><path d="M316 84 L321.5 89.5 H310.5 Z M316 98 L321.5 92.5 H310.5 Z" fill="#0A14D0"/><path d="M312.5 89 L316 85.5 M313 93.5 L316 96.5" stroke="#90A8F0" stroke-width="0.8"/><path d="M333.5 84 H344.5 L339 89.5 Z M333.5 98 H344.5 L339 92.5 Z" fill="#0A14D0"/><path d="M336 85 L339 88 M336 97 L339 94" stroke="#90A8F0" stroke-width="0.8"/></g>
<rect x="247" y="80" width="1" height="22" fill="#5F8E66"/>
<rect x="248" y="80" width="1" height="22" fill="#C8EACC"/>
<rect x="351" y="80" width="345" height="22" fill="#9CC0A2"/>
<text x="355" y="95" font-size="11" font-weight="400" fill="#000" stroke="#000" stroke-width="0.1" text-anchor="start" >X1:</text>
<rect x="376" y="80" width="49" height="21" fill="#fff"/>
<rect x="376" y="80" width="49" height="1" fill="#5F8E66"/>
<rect x="376" y="80" width="1" height="21" fill="#5F8E66"/>
<rect x="376" y="100" width="49" height="1" fill="#C8EACC"/>
<rect x="424" y="80" width="1" height="21" fill="#C8EACC"/>
<text x="383" y="95" font-size="11" font-weight="400" fill="#000" stroke="#000" stroke-width="0.1" text-anchor="start" >640 mA</text>
<text x="429" y="95" font-size="11" font-weight="400" fill="#000" stroke="#000" stroke-width="0.1" text-anchor="start" >X2:</text>
<rect x="450" y="80" width="50" height="21" fill="#fff"/>
<rect x="450" y="80" width="50" height="1" fill="#5F8E66"/>
<rect x="450" y="80" width="1" height="21" fill="#5F8E66"/>
<rect x="450" y="100" width="50" height="1" fill="#C8EACC"/>
<rect x="499" y="80" width="1" height="21" fill="#C8EACC"/>
<text x="455" y="95" font-size="11" font-weight="400" fill="#000" stroke="#000" stroke-width="0.1" text-anchor="start" >-3,168 A</text>
<text x="506" y="95" font-size="11" font-weight="400" fill="#000" stroke="#000" stroke-width="0.1" text-anchor="start" >T:</text>
<rect x="524" y="80" width="172" height="21" fill="#fff"/>
<rect x="524" y="80" width="172" height="1" fill="#5F8E66"/>
<rect x="524" y="80" width="1" height="21" fill="#5F8E66"/>
<rect x="524" y="100" width="172" height="1" fill="#C8EACC"/>
<rect x="695" y="80" width="1" height="21" fill="#C8EACC"/>
<text x="610" y="95" font-size="11" font-weight="400" fill="#000" stroke="#000" stroke-width="0.1" text-anchor="middle" >1 сек. 398 мсек.</text>
<rect x="220" y="102" width="1054" height="1" fill="#5F8E66"/>
<rect x="220" y="103" width="1054" height="1" fill="#C8EACC"/>
<rect x="222" y="494" width="1050" height="15" fill="#D0E4D3"/>
<rect x="222" y="493" width="1050" height="1" fill="#5F8E66"/>
<rect x="222" y="494" width="15" height="15" fill="#A3C8A9"/>
<rect x="222" y="494" width="15" height="1" fill="#C8EACC"/>
<rect x="222" y="494" width="1" height="15" fill="#C8EACC"/>
<rect x="222" y="508" width="15" height="1" fill="#000"/>
<rect x="236" y="494" width="1" height="15" fill="#000"/>
<path d="M227 501.5 l3.5 -3.5 v7 z" fill="#000"/>
<rect x="1257" y="494" width="15" height="15" fill="#A3C8A9"/>
<rect x="1257" y="494" width="15" height="1" fill="#C8EACC"/>
<rect x="1257" y="494" width="1" height="15" fill="#C8EACC"/>
<rect x="1257" y="508" width="15" height="1" fill="#000"/>
<rect x="1271" y="494" width="1" height="15" fill="#000"/>
<path d="M1266 501.5 l-3.5 -3.5 v7 z" fill="#000"/>
<rect x="398" y="494" width="15" height="15" fill="#A3C8A9"/>
<rect x="398" y="494" width="15" height="1" fill="#C8EACC"/>
<rect x="398" y="494" width="1" height="15" fill="#C8EACC"/>
<rect x="398" y="508" width="15" height="1" fill="#000"/>
<rect x="412" y="494" width="1" height="15" fill="#000"/>
<rect x="220" y="513" width="1053" height="20" fill="#C8EACC"/>
<rect x="221" y="514" width="1051" height="18" fill="#004000"/>
<text x="223" y="526" font-size="12" font-weight="700" fill="#fff" stroke="#fff" stroke-width="0.35" text-anchor="start" >Параметры циклов кодов АЛСН</text>
<rect x="220" y="533" width="1054" height="1" fill="#5F8E66"/>
<rect x="220" y="534" width="1054" height="1" fill="#C8EACC"/>
<rect x="221" y="536" width="22" height="22" fill="#A3C8A9"/>
<rect x="221" y="536" width="22" height="1" fill="#C8EACC"/>
<rect x="221" y="536" width="1" height="22" fill="#C8EACC"/>
<rect x="221" y="557" width="22" height="1" fill="#000"/>
<rect x="242" y="536" width="1" height="22" fill="#000"/>
<path d="M224.5 540 v13 M225 554.5 h14" fill="none" stroke="#A07050" stroke-width="1" stroke-dasharray="1 1"/>
<path d="M233 546 l3 -3 v10 h-3 z" fill="#C8A8E0" shape-rendering="auto"/>
<path d="M226 552 C227.5 538 231 537 236 552 Q237.5 548 239 545" fill="none" stroke="#D03818" stroke-width="1.3" shape-rendering="auto"/>
<path d="M235.5 542 v10" fill="none" stroke="#5030B0" stroke-width="1.3"/><path d="M233 549 h5 l-2.5 4 z" fill="#5030B0" shape-rendering="auto"/>
<rect x="225" y="540" width="1" height="13" fill="#000"/>
<rect x="225" y="552" width="14" height="1" fill="#000"/>
<rect x="255" y="536" width="23" height="22" fill="#A3C8A9"/>
<rect x="255" y="536" width="23" height="1" fill="#C8EACC"/>
<rect x="255" y="536" width="1" height="22" fill="#C8EACC"/>
<rect x="255" y="557" width="23" height="1" fill="#000"/>
<rect x="277" y="536" width="1" height="22" fill="#000"/>
<rect x="278" y="536" width="23" height="22" fill="#A3C8A9"/>
<rect x="278" y="536" width="23" height="1" fill="#C8EACC"/>
<rect x="278" y="536" width="1" height="22" fill="#C8EACC"/>
<rect x="278" y="557" width="23" height="1" fill="#000"/>
<rect x="300" y="536" width="1" height="22" fill="#000"/>
<rect x="305" y="536" width="23" height="22" fill="#A3C8A9"/>
<rect x="305" y="536" width="23" height="1" fill="#C8EACC"/>
<rect x="305" y="536" width="1" height="22" fill="#C8EACC"/>
<rect x="305" y="557" width="23" height="1" fill="#000"/>
<rect x="327" y="536" width="1" height="22" fill="#000"/>
<rect x="328" y="536" width="23" height="22" fill="#A3C8A9"/>
<rect x="328" y="536" width="23" height="1" fill="#C8EACC"/>
<rect x="328" y="536" width="1" height="22" fill="#C8EACC"/>
<rect x="328" y="557" width="23" height="1" fill="#000"/>
<rect x="350" y="536" width="1" height="22" fill="#000"/>
<rect x="265" y="540" width="2" height="14" fill="#000"/>
<rect x="288" y="540" width="2" height="14" fill="#000"/>
<rect x="309" y="546" width="14" height="2" fill="#000"/>
<rect x="332" y="546" width="14" height="2" fill="#000"/>
<g shape-rendering="auto"><path d="M258.5 547 L264.5 541 V553 Z M273.5 547 L267.5 541 V553 Z" fill="#0A14D0"/><path d="M260 547 L264 543 M272 547 L268 543" stroke="#90A8F0" stroke-width="0.8"/><path d="M282 541 L287.5 547 L282 553 Z M296.5 541 L291 547 L296.5 553 Z" fill="#0A14D0"/><path d="M283 549 L286 547 M295.5 549 L292.5 547" stroke="#90A8F0" stroke-width="0.8"/><path d="M316 540 L321.5 545.5 H310.5 Z M316 554 L321.5 548.5 H310.5 Z" fill="#0A14D0"/><path d="M312.5 545 L316 541.5 M313 549.5 L316 552.5" stroke="#90A8F0" stroke-width="0.8"/><path d="M333.5 540 H344.5 L339 545.5 Z M333.5 554 H344.5 L339 548.5 Z" fill="#0A14D0"/><path d="M336 541 L339 544 M336 553 L339 550" stroke="#90A8F0" stroke-width="0.8"/></g>
<rect x="247" y="536" width="1" height="22" fill="#5F8E66"/>
<rect x="248" y="536" width="1" height="22" fill="#C8EACC"/>
<rect x="222" y="942" width="1050" height="15" fill="#D0E4D3"/>
<rect x="222" y="941" width="1050" height="1" fill="#5F8E66"/>
<rect x="222" y="942" width="15" height="15" fill="#A3C8A9"/>
<rect x="222" y="942" width="15" height="1" fill="#C8EACC"/>
<rect x="222" y="942" width="1" height="15" fill="#C8EACC"/>
<rect x="222" y="956" width="15" height="1" fill="#000"/>
<rect x="236" y="942" width="1" height="15" fill="#000"/>
<path d="M227 949.5 l3.5 -3.5 v7 z" fill="#000"/>
<rect x="1257" y="942" width="15" height="15" fill="#A3C8A9"/>
<rect x="1257" y="942" width="15" height="1" fill="#C8EACC"/>
<rect x="1257" y="942" width="1" height="15" fill="#C8EACC"/>
<rect x="1257" y="956" width="15" height="1" fill="#000"/>
<rect x="1271" y="942" width="1" height="15" fill="#000"/>
<path d="M1266 949.5 l-3.5 -3.5 v7 z" fill="#000"/>
<rect x="874" y="942" width="15" height="15" fill="#A3C8A9"/>
<rect x="874" y="942" width="15" height="1" fill="#C8EACC"/>
<rect x="874" y="942" width="1" height="15" fill="#C8EACC"/>
<rect x="874" y="956" width="15" height="1" fill="#000"/>
<rect x="888" y="942" width="1" height="15" fill="#000"/>
<rect x="232" y="115" width="33" height="1" fill="#C8EACC"/>
<rect x="232" y="115" width="1" height="324" fill="#C8EACC"/>
<rect x="232" y="438" width="33" height="1" fill="#5F8E66"/>
<text x="238" y="131" font-size="11" font-weight="400" fill="#000" stroke="#000" stroke-width="0.1" text-anchor="start" >А</text>
<rect x="265" y="114" width="1" height="327" fill="#000"/>
<rect x="265" y="114" width="1001" height="1" fill="#000"/>
<rect x="1265" y="114" width="1" height="327" fill="#000"/>
<rect x="265" y="439" width="1001" height="2" fill="#000"/>
<rect x="261" y="196" width="4" height="1" fill="#000"/>
<text x="261" y="201" font-size="11" font-weight="400" fill="#1428B4" stroke="#1428B4" stroke-width="0.1" text-anchor="end" >10</text>
<rect x="261" y="277" width="4" height="1" fill="#000"/>
<text x="261" y="282" font-size="11" font-weight="400" fill="#1428B4" stroke="#1428B4" stroke-width="0.1" text-anchor="end" >0</text>
<rect x="261" y="358" width="4" height="1" fill="#000"/>
<text x="261" y="363" font-size="11" font-weight="400" fill="#1428B4" stroke="#1428B4" stroke-width="0.1" text-anchor="end" >-10</text>
<path d="M266 196.5 H1265" stroke="#000" stroke-width="1" stroke-dasharray="3 3" fill="none"/>
<path d="M266 358.5 H1265" stroke="#000" stroke-width="1" stroke-dasharray="3 3" fill="none"/>
<path d="M515.5 115 V443" stroke="#000" stroke-width="1" stroke-dasharray="3 3" fill="none"/>
<path d="M765.5 115 V443" stroke="#000" stroke-width="1" stroke-dasharray="3 3" fill="none"/>
<path d="M1015.5 115 V443" stroke="#000" stroke-width="1" stroke-dasharray="3 3" fill="none"/>
<rect x="266" y="441" width="1" height="33" fill="#C8EACC"/>
<rect x="266" y="473" width="999" height="1" fill="#5F8E66"/>
<rect x="1264" y="441" width="1" height="33" fill="#5F8E66"/>
<text x="281" y="455" font-size="11" font-weight="400" fill="#000" stroke="#000" stroke-width="0.1" text-anchor="start" >А</text>
<text x="516" y="456" font-size="11" font-weight="400" fill="#000" stroke="#000" stroke-width="0.1" text-anchor="middle" >11:59:14</text>
<text x="766" y="456" font-size="11" font-weight="400" fill="#000" stroke="#000" stroke-width="0.1" text-anchor="middle" >11:59:15</text>
<text x="1016" y="456" font-size="11" font-weight="400" fill="#000" stroke="#000" stroke-width="0.1" text-anchor="middle" >11:59:16</text>
<rect x="222" y="474" width="44" height="15" fill="#A8CCAE"/>
<rect x="222" y="474" width="44" height="1" fill="#C8EACC"/>
<rect x="222" y="474" width="1" height="15" fill="#C8EACC"/>
<rect x="222" y="488" width="44" height="1" fill="#5F8E66"/>
<text x="223" y="486" font-size="12" font-weight="700" fill="#000" stroke="#000" stroke-width="0.35" text-anchor="start" >Реле И</text>
<rect x="266" y="474" width="999" height="1" fill="#5F8E66"/>
<rect x="222" y="489" width="1043" height="1" fill="#C8EACC"/>
<path d="M266 277.5 H1265" stroke="#000" stroke-width="1" stroke-dasharray="3 3" fill="none"/>
<polyline points="266,274.8" fill="none" stroke="#0808A8" stroke-width="1.4" shape-rendering="auto"/><polyline points="340,276.5 341,273.7 342,273.8 343,273.6 344,274.5 345,276.5 346,274.7 347,273.2 348,272.5 349,275.7 350,276.5 351,275.7 352,272.5 353,272.9 354,275.8 355,276.5 356,273.6 357,273.1 358,273.2 359,275.5 360,276.5 361,274.7 362,275.3 363,274.8 364,275.3 365,276.5 366,274.8 367,273.9 368,272.3 369,274.7 370,276.5 371,274.7 372,273.0 373,273.8 374,275.3 375,276.5 376,273.6 377,272.4 378,272.9 379,275.2 380,276.5 381,275.2 382,275.3 383,272.6 384,275.0 385,276.5 386,275.0 387,271.9 388,272.3 389,275.9 390,276.5 391,273.8 392,273.8 393,271.8 394,275.0 395,276.5 396,274.4 397,272.6 398,274.5 399,275.7 400,276.5 401,273.6 402,272.7 403,275.1 404,275.3 405,276.5 406,275.8 407,272.5 408,274.9 409,274.6 410,276.5 411,275.5 412,272.8 413,275.1 414,274.4 415,276.5 416,274.9 417,274.7 418,274.5 419,273.6 420,276.5 421,275.2 422,272.2 423,274.7 424,275.0 425,276.5 426,274.4 427,275.2 428,271.8 429,275.4 430,276.5 431,274.1 432,274.3 433,274.4 434,275.7 435,276.5 436,274.5 437,274.6 438,273.3 439,275.0 440,276.5 441,273.7 442,273.7 443,273.4 444,273.9 445,276.5 446,275.5 447,272.1 448,272.4 449,275.3 450,276.5 451,274.2 452,272.0 453,274.8 454,273.7 455,276.5 456,274.5 457,273.9 458,275.2 459,275.8 460,276.5 461,275.4 462,272.9 463,274.6 464,274.0" fill="none" stroke="#0808A8" stroke-width="1.4" shape-rendering="auto"/><polyline points="566,274.5 567,274.4 568,274.9 569,274.2 570,276.5 571,275.4 572,273.4 573,272.3 574,274.5 575,276.5 576,273.8 577,274.8 578,275.5" fill="none" stroke="#0808A8" stroke-width="1.4" shape-rendering="auto"/><polyline points="652,274.5 653,273.9 654,275.8 655,276.5 656,275.0 657,273.4 658,275.0 659,275.1 660,276.5 661,273.6 662,273.0 663,272.9 664,274.5" fill="none" stroke="#0808A8" stroke-width="1.4" shape-rendering="auto"/><polyline points="734,275.6 735,276.5 736,275.9 737,272.1 738,272.9 739,273.6 740,276.5 741,274.4 742,273.7 743,272.8 744,275.2 745,276.5 746,275.7 747,273.5 748,272.7 749,273.8 750,276.5 751,274.3 752,272.5 753,272.1 754,275.1 755,276.5 756,273.8 757,272.2 758,274.0 759,274.1 760,276.5 761,274.6 762,273.2 763,274.1 764,274.5 765,276.5 766,275.7 767,273.1 768,271.8 769,273.8 770,276.5 771,275.0 772,272.8 773,273.3 774,274.9 775,276.5 776,275.7 777,272.7 778,275.4 779,274.5 780,276.5 781,275.4 782,272.9 783,273.7 784,274.5 785,276.5 786,275.3 787,275.5 788,274.4 789,274.3 790,276.5 791,275.5 792,272.1 793,273.0 794,274.9 795,276.5 796,275.1 797,273.0 798,274.8 799,274.9 800,276.5 801,273.8 802,272.2 803,274.1 804,274.5 805,276.5 806,275.6 807,273.7 808,272.4 809,273.9 810,276.5 811,273.7 812,274.5 813,274.9 814,274.9 815,276.5 816,275.4 817,274.0 818,273.2 819,274.8 820,276.5 821,273.9 822,271.8 823,273.8 824,275.7 825,276.5 826,273.9 827,275.4 828,272.9 829,274.6 830,276.5 831,274.1 832,275.5 833,275.0 834,274.8 835,276.5 836,274.0 837,274.6 838,275.0 839,275.8 840,276.5 841,274.9 842,273.2 843,273.1 844,274.0 845,276.5 846,274.3 847,274.8 848,273.7 849,275.5 850,276.5 851,274.8 852,272.8 853,274.9 854,275.3 855,276.5 856,274.3 857,273.6 858,273.2 859,274.1 860,276.5 861,274.1" fill="none" stroke="#0808A8" stroke-width="1.4" shape-rendering="auto"/><polyline points="962,272.1 963,275.2 964,273.7 965,276.5 966,275.6 967,273.8 968,273.2 969,273.8 970,276.5 971,274.6 972,272.2 973,272.5 974,273.7" fill="none" stroke="#0808A8" stroke-width="1.4" shape-rendering="auto"/><polyline points="1046,274.8 1047,273.1 1048,274.8 1049,274.2 1050,276.5 1051,274.4 1052,272.8 1053,274.7 1054,273.8 1055,276.5 1056,273.6 1057,273.5 1058,272.5 1059,275.2" fill="none" stroke="#0808A8" stroke-width="1.4" shape-rendering="auto"/><polyline points="1130,276.5 1131,273.9 1132,274.2 1133,275.2 1134,274.9 1135,276.5 1136,274.1 1137,273.7 1138,275.4 1139,274.0 1140,276.5 1141,274.0 1142,274.9 1143,274.3 1144,274.1 1145,276.5 1146,275.6 1147,273.6 1148,272.8 1149,273.9 1150,276.5 1151,273.7 1152,273.7 1153,271.9 1154,275.7 1155,276.5 1156,274.7 1157,274.4 1158,272.8 1159,274.4 1160,276.5 1161,273.9 1162,273.4 1163,274.4 1164,275.0 1165,276.5 1166,273.8 1167,274.8 1168,272.3 1169,273.6 1170,276.5 1171,274.6 1172,274.8 1173,273.5 1174,274.7 1175,276.5 1176,275.8 1177,271.9 1178,273.6 1179,275.0 1180,276.5 1181,274.6 1182,273.7 1183,272.9 1184,275.8 1185,276.5 1186,274.9 1187,271.9 1188,272.0 1189,275.3 1190,276.5 1191,275.6 1192,273.9 1193,272.4 1194,273.8 1195,276.5 1196,275.2 1197,274.8 1198,273.2 1199,273.7 1200,276.5 1201,274.1 1202,275.5 1203,274.8 1204,275.4 1205,276.5 1206,275.2 1207,274.2 1208,273.2 1209,275.7 1210,276.5 1211,275.6 1212,273.6 1213,274.6 1214,275.4 1215,276.5 1216,274.9 1217,274.1 1218,274.0 1219,274.7 1220,276.5 1221,275.4 1222,273.1 1223,273.1 1224,274.7 1225,276.5 1226,274.5 1227,272.3 1228,274.7 1229,274.2 1230,276.5 1231,273.8 1232,274.3 1233,274.4 1234,273.7 1235,276.5 1236,273.6 1237,272.2 1238,275.0 1239,275.3 1240,276.5 1241,275.3 1242,275.2 1243,272.4 1244,274.9 1245,276.5 1246,275.6 1247,274.0 1248,272.9 1249,275.9 1250,276.5 1251,274.3 1252,272.1 1253,271.9 1254,275.6 1255,276.5 1256,274.1 1257,273.6 1258,272.9" fill="none" stroke="#0808A8" stroke-width="1.4" shape-rendering="auto"/><rect x="270" y="260" width="5" height="32" fill="#96AAE6"/><rect x="270" y="254" width="1" height="20" fill="#0808A8"/><rect x="271" y="257" width="1" height="15" fill="#0808A8"/><rect x="272" y="269" width="1" height="22" fill="#0808A8"/><rect x="273" y="282" width="1" height="16" fill="#0808A8"/><rect x="274" y="280" width="1" height="13" fill="#0808A8"/><rect x="271" y="277" width="3" height="1" fill="#0808A8"/><rect x="275" y="250" width="5" height="52" fill="#96AAE6"/><rect x="275" y="240" width="1" height="32" fill="#0808A8"/><rect x="276" y="243" width="1" height="25" fill="#0808A8"/><rect x="277" y="264" width="1" height="36" fill="#0808A8"/><rect x="278" y="286" width="1" height="26" fill="#0808A8"/><rect x="279" y="282" width="1" height="25" fill="#0808A8"/><rect x="276" y="277" width="3" height="1" fill="#0808A8"/><rect x="280" y="245" width="5" height="61" fill="#96AAE6"/><rect x="280" y="233" width="1" height="38" fill="#0808A8"/><rect x="281" y="236" width="1" height="31" fill="#0808A8"/><rect x="282" y="263" width="1" height="40" fill="#0808A8"/><rect x="283" y="287" width="1" height="32" fill="#0808A8"/><rect x="284" y="283" width="1" height="31" fill="#0808A8"/><rect x="281" y="277" width="3" height="1" fill="#0808A8"/><rect x="285" y="245" width="5" height="60" fill="#96AAE6"/><rect x="285" y="233" width="1" height="38" fill="#0808A8"/><rect x="286" y="236" width="1" height="31" fill="#0808A8"/><rect x="287" y="263" width="1" height="40" fill="#0808A8"/><rect x="288" y="287" width="1" height="30" fill="#0808A8"/><rect x="289" y="283" width="1" height="29" fill="#0808A8"/><rect x="286" y="277" width="3" height="1" fill="#0808A8"/><rect x="290" y="247" width="5" height="59" fill="#96AAE6"/><rect x="290" y="235" width="1" height="36" fill="#0808A8"/><rect x="291" y="238" width="1" height="29" fill="#0808A8"/><rect x="292" y="263" width="1" height="40" fill="#0808A8"/><rect x="293" y="287" width="1" height="30" fill="#0808A8"/><rect x="294" y="283" width="1" height="29" fill="#0808A8"/><rect x="291" y="277" width="3" height="1" fill="#0808A8"/><rect x="295" y="244" width="5" height="64" fill="#96AAE6"/><rect x="295" y="232" width="1" height="39" fill="#0808A8"/><rect x="296" y="235" width="1" height="32" fill="#0808A8"/><rect x="297" y="263" width="1" height="40" fill="#0808A8"/><rect x="298" y="287" width="1" height="34" fill="#0808A8"/><rect x="299" y="283" width="1" height="33" fill="#0808A8"/><rect x="296" y="277" width="3" height="1" fill="#0808A8"/><rect x="300" y="244" width="5" height="61" fill="#96AAE6"/><rect x="300" y="231" width="1" height="40" fill="#0808A8"/><rect x="301" y="234" width="1" height="33" fill="#0808A8"/><rect x="302" y="263" width="1" height="40" fill="#0808A8"/><rect x="303" y="287" width="1" height="29" fill="#0808A8"/><rect x="304" y="283" width="1" height="28" fill="#0808A8"/><rect x="301" y="277" width="3" height="1" fill="#0808A8"/><rect x="305" y="247" width="5" height="61" fill="#96AAE6"/><rect x="305" y="236" width="1" height="35" fill="#0808A8"/><rect x="306" y="239" width="1" height="28" fill="#0808A8"/><rect x="307" y="263" width="1" height="40" fill="#0808A8"/><rect x="308" y="287" width="1" height="34" fill="#0808A8"/><rect x="309" y="283" width="1" height="33" fill="#0808A8"/><rect x="306" y="277" width="3" height="1" fill="#0808A8"/><rect x="310" y="246" width="5" height="62" fill="#96AAE6"/><rect x="310" y="234" width="1" height="37" fill="#0808A8"/><rect x="311" y="237" width="1" height="30" fill="#0808A8"/><rect x="312" y="263" width="1" height="40" fill="#0808A8"/><rect x="313" y="287" width="1" height="33" fill="#0808A8"/><rect x="314" y="283" width="1" height="32" fill="#0808A8"/><rect x="311" y="277" width="3" height="1" fill="#0808A8"/><rect x="315" y="246" width="5" height="60" fill="#96AAE6"/><rect x="315" y="234" width="1" height="37" fill="#0808A8"/><rect x="316" y="237" width="1" height="30" fill="#0808A8"/><rect x="317" y="263" width="1" height="40" fill="#0808A8"/><rect x="318" y="287" width="1" height="31" fill="#0808A8"/><rect x="319" y="283" width="1" height="30" fill="#0808A8"/><rect x="316" y="277" width="3" height="1" fill="#0808A8"/><rect x="320" y="246" width="5" height="61" fill="#96AAE6"/><rect x="320" y="233" width="1" height="38" fill="#0808A8"/><rect x="321" y="236" width="1" height="31" fill="#0808A8"/><rect x="322" y="263" width="1" height="40" fill="#0808A8"/><rect x="323" y="287" width="1" height="31" fill="#0808A8"/><rect x="324" y="283" width="1" height="30" fill="#0808A8"/><rect x="321" y="277" width="3" height="1" fill="#0808A8"/><rect x="325" y="245" width="5" height="60" fill="#96AAE6"/><rect x="325" y="233" width="1" height="38" fill="#0808A8"/><rect x="326" y="236" width="1" height="31" fill="#0808A8"/><rect x="327" y="263" width="1" height="40" fill="#0808A8"/><rect x="328" y="287" width="1" height="29" fill="#0808A8"/><rect x="329" y="283" width="1" height="28" fill="#0808A8"/><rect x="326" y="277" width="3" height="1" fill="#0808A8"/><rect x="330" y="258" width="5" height="38" fill="#96AAE6"/><rect x="330" y="250" width="1" height="23" fill="#0808A8"/><rect x="331" y="253" width="1" height="18" fill="#0808A8"/><rect x="332" y="269" width="1" height="24" fill="#0808A8"/><rect x="333" y="283" width="1" height="20" fill="#0808A8"/><rect x="334" y="281" width="1" height="17" fill="#0808A8"/><rect x="331" y="277" width="3" height="1" fill="#0808A8"/><rect x="337" y="270" width="1" height="14" fill="#0808A8"/><rect x="341" y="273" width="1" height="8" fill="#0808A8"/><rect x="468" y="260" width="5" height="33" fill="#96AAE6"/><rect x="468" y="254" width="1" height="20" fill="#0808A8"/><rect x="469" y="257" width="1" height="15" fill="#0808A8"/><rect x="470" y="269" width="1" height="22" fill="#0808A8"/><rect x="471" y="282" width="1" height="17" fill="#0808A8"/><rect x="472" y="280" width="1" height="14" fill="#0808A8"/><rect x="469" y="277" width="3" height="1" fill="#0808A8"/><rect x="473" y="248" width="5" height="56" fill="#96AAE6"/><rect x="473" y="237" width="1" height="35" fill="#0808A8"/><rect x="474" y="240" width="1" height="28" fill="#0808A8"/><rect x="475" y="264" width="1" height="36" fill="#0808A8"/><rect x="476" y="286" width="1" height="28" fill="#0808A8"/><rect x="477" y="282" width="1" height="27" fill="#0808A8"/><rect x="474" y="277" width="3" height="1" fill="#0808A8"/><rect x="478" y="247" width="5" height="59" fill="#96AAE6"/><rect x="478" y="235" width="1" height="36" fill="#0808A8"/><rect x="479" y="238" width="1" height="29" fill="#0808A8"/><rect x="480" y="263" width="1" height="40" fill="#0808A8"/><rect x="481" y="287" width="1" height="30" fill="#0808A8"/><rect x="482" y="283" width="1" height="29" fill="#0808A8"/><rect x="479" y="277" width="3" height="1" fill="#0808A8"/><rect x="483" y="246" width="5" height="60" fill="#96AAE6"/><rect x="483" y="233" width="1" height="38" fill="#0808A8"/><rect x="484" y="236" width="1" height="31" fill="#0808A8"/><rect x="485" y="263" width="1" height="40" fill="#0808A8"/><rect x="486" y="287" width="1" height="29" fill="#0808A8"/><rect x="487" y="283" width="1" height="28" fill="#0808A8"/><rect x="484" y="277" width="3" height="1" fill="#0808A8"/><rect x="488" y="244" width="5" height="64" fill="#96AAE6"/><rect x="488" y="232" width="1" height="39" fill="#0808A8"/><rect x="489" y="235" width="1" height="32" fill="#0808A8"/><rect x="490" y="263" width="1" height="40" fill="#0808A8"/><rect x="491" y="287" width="1" height="33" fill="#0808A8"/><rect x="492" y="283" width="1" height="32" fill="#0808A8"/><rect x="489" y="277" width="3" height="1" fill="#0808A8"/><rect x="493" y="245" width="5" height="63" fill="#96AAE6"/><rect x="493" y="232" width="1" height="39" fill="#0808A8"/><rect x="494" y="235" width="1" height="32" fill="#0808A8"/><rect x="495" y="263" width="1" height="40" fill="#0808A8"/><rect x="496" y="287" width="1" height="33" fill="#0808A8"/><rect x="497" y="283" width="1" height="32" fill="#0808A8"/><rect x="494" y="277" width="3" height="1" fill="#0808A8"/><rect x="498" y="245" width="5" height="61" fill="#96AAE6"/><rect x="498" y="233" width="1" height="38" fill="#0808A8"/><rect x="499" y="236" width="1" height="31" fill="#0808A8"/><rect x="500" y="263" width="1" height="40" fill="#0808A8"/><rect x="501" y="287" width="1" height="31" fill="#0808A8"/><rect x="502" y="283" width="1" height="30" fill="#0808A8"/><rect x="499" y="277" width="3" height="1" fill="#0808A8"/><rect x="503" y="245" width="5" height="62" fill="#96AAE6"/><rect x="503" y="233" width="1" height="38" fill="#0808A8"/><rect x="504" y="236" width="1" height="31" fill="#0808A8"/><rect x="505" y="263" width="1" height="40" fill="#0808A8"/><rect x="506" y="287" width="1" height="32" fill="#0808A8"/><rect x="507" y="283" width="1" height="31" fill="#0808A8"/><rect x="504" y="277" width="3" height="1" fill="#0808A8"/><rect x="508" y="244" width="5" height="64" fill="#96AAE6"/><rect x="508" y="231" width="1" height="40" fill="#0808A8"/><rect x="509" y="234" width="1" height="33" fill="#0808A8"/><rect x="510" y="263" width="1" height="40" fill="#0808A8"/><rect x="511" y="287" width="1" height="33" fill="#0808A8"/><rect x="512" y="283" width="1" height="32" fill="#0808A8"/><rect x="509" y="277" width="3" height="1" fill="#0808A8"/><rect x="513" y="247" width="5" height="62" fill="#96AAE6"/><rect x="513" y="235" width="1" height="36" fill="#0808A8"/><rect x="514" y="238" width="1" height="29" fill="#0808A8"/><rect x="515" y="263" width="1" height="40" fill="#0808A8"/><rect x="516" y="287" width="1" height="34" fill="#0808A8"/><rect x="517" y="283" width="1" height="33" fill="#0808A8"/><rect x="514" y="277" width="3" height="1" fill="#0808A8"/><rect x="518" y="245" width="5" height="63" fill="#96AAE6"/><rect x="518" y="232" width="1" height="39" fill="#0808A8"/><rect x="519" y="235" width="1" height="32" fill="#0808A8"/><rect x="520" y="263" width="1" height="40" fill="#0808A8"/><rect x="521" y="287" width="1" height="33" fill="#0808A8"/><rect x="522" y="283" width="1" height="32" fill="#0808A8"/><rect x="519" y="277" width="3" height="1" fill="#0808A8"/><rect x="523" y="245" width="5" height="62" fill="#96AAE6"/><rect x="523" y="232" width="1" height="39" fill="#0808A8"/><rect x="524" y="235" width="1" height="32" fill="#0808A8"/><rect x="525" y="263" width="1" height="40" fill="#0808A8"/><rect x="526" y="287" width="1" height="31" fill="#0808A8"/><rect x="527" y="283" width="1" height="30" fill="#0808A8"/><rect x="524" y="277" width="3" height="1" fill="#0808A8"/><rect x="528" y="244" width="5" height="64" fill="#96AAE6"/><rect x="528" y="232" width="1" height="39" fill="#0808A8"/><rect x="529" y="235" width="1" height="32" fill="#0808A8"/><rect x="530" y="263" width="1" height="40" fill="#0808A8"/><rect x="531" y="287" width="1" height="33" fill="#0808A8"/><rect x="532" y="283" width="1" height="32" fill="#0808A8"/><rect x="529" y="277" width="3" height="1" fill="#0808A8"/><rect x="533" y="245" width="5" height="63" fill="#96AAE6"/><rect x="533" y="233" width="1" height="38" fill="#0808A8"/><rect x="534" y="236" width="1" height="31" fill="#0808A8"/><rect x="535" y="263" width="1" height="40" fill="#0808A8"/><rect x="536" y="287" width="1" height="33" fill="#0808A8"/><rect x="537" y="283" width="1" height="32" fill="#0808A8"/><rect x="534" y="277" width="3" height="1" fill="#0808A8"/><rect x="538" y="245" width="5" height="62" fill="#96AAE6"/><rect x="538" y="232" width="1" height="39" fill="#0808A8"/><rect x="539" y="235" width="1" height="32" fill="#0808A8"/><rect x="540" y="263" width="1" height="40" fill="#0808A8"/><rect x="541" y="287" width="1" height="31" fill="#0808A8"/><rect x="542" y="283" width="1" height="30" fill="#0808A8"/><rect x="539" y="277" width="3" height="1" fill="#0808A8"/><rect x="543" y="245" width="5" height="60" fill="#96AAE6"/><rect x="543" y="232" width="1" height="39" fill="#0808A8"/><rect x="544" y="235" width="1" height="32" fill="#0808A8"/><rect x="545" y="263" width="1" height="40" fill="#0808A8"/><rect x="546" y="287" width="1" height="29" fill="#0808A8"/><rect x="547" y="283" width="1" height="28" fill="#0808A8"/><rect x="544" y="277" width="3" height="1" fill="#0808A8"/><rect x="548" y="246" width="5" height="61" fill="#96AAE6"/><rect x="548" y="234" width="1" height="37" fill="#0808A8"/><rect x="549" y="237" width="1" height="30" fill="#0808A8"/><rect x="550" y="263" width="1" height="40" fill="#0808A8"/><rect x="551" y="287" width="1" height="31" fill="#0808A8"/><rect x="552" y="283" width="1" height="30" fill="#0808A8"/><rect x="549" y="277" width="3" height="1" fill="#0808A8"/><rect x="553" y="247" width="5" height="59" fill="#96AAE6"/><rect x="553" y="236" width="1" height="35" fill="#0808A8"/><rect x="554" y="239" width="1" height="28" fill="#0808A8"/><rect x="555" y="263" width="1" height="40" fill="#0808A8"/><rect x="556" y="287" width="1" height="31" fill="#0808A8"/><rect x="557" y="283" width="1" height="30" fill="#0808A8"/><rect x="554" y="277" width="3" height="1" fill="#0808A8"/><rect x="558" y="258" width="5" height="37" fill="#96AAE6"/><rect x="558" y="250" width="1" height="23" fill="#0808A8"/><rect x="559" y="253" width="1" height="18" fill="#0808A8"/><rect x="560" y="269" width="1" height="24" fill="#0808A8"/><rect x="561" y="283" width="1" height="19" fill="#0808A8"/><rect x="562" y="281" width="1" height="17" fill="#0808A8"/><rect x="559" y="277" width="3" height="1" fill="#0808A8"/><rect x="563" y="270" width="1" height="14" fill="#0808A8"/><rect x="567" y="273" width="1" height="8" fill="#0808A8"/><rect x="582" y="260" width="5" height="34" fill="#96AAE6"/><rect x="582" y="254" width="1" height="20" fill="#0808A8"/><rect x="583" y="257" width="1" height="15" fill="#0808A8"/><rect x="584" y="269" width="1" height="22" fill="#0808A8"/><rect x="585" y="282" width="1" height="19" fill="#0808A8"/><rect x="586" y="280" width="1" height="16" fill="#0808A8"/><rect x="583" y="277" width="3" height="1" fill="#0808A8"/><rect x="587" y="248" width="5" height="55" fill="#96AAE6"/><rect x="587" y="237" width="1" height="34" fill="#0808A8"/><rect x="588" y="240" width="1" height="28" fill="#0808A8"/><rect x="589" y="264" width="1" height="36" fill="#0808A8"/><rect x="590" y="286" width="1" height="28" fill="#0808A8"/><rect x="591" y="282" width="1" height="26" fill="#0808A8"/><rect x="588" y="277" width="3" height="1" fill="#0808A8"/><rect x="592" y="245" width="5" height="62" fill="#96AAE6"/><rect x="592" y="233" width="1" height="38" fill="#0808A8"/><rect x="593" y="236" width="1" height="31" fill="#0808A8"/><rect x="594" y="263" width="1" height="40" fill="#0808A8"/><rect x="595" y="287" width="1" height="32" fill="#0808A8"/><rect x="596" y="283" width="1" height="31" fill="#0808A8"/><rect x="593" y="277" width="3" height="1" fill="#0808A8"/><rect x="597" y="246" width="5" height="61" fill="#96AAE6"/><rect x="597" y="233" width="1" height="38" fill="#0808A8"/><rect x="598" y="236" width="1" height="31" fill="#0808A8"/><rect x="599" y="263" width="1" height="40" fill="#0808A8"/><rect x="600" y="287" width="1" height="31" fill="#0808A8"/><rect x="601" y="283" width="1" height="30" fill="#0808A8"/><rect x="598" y="277" width="3" height="1" fill="#0808A8"/><rect x="602" y="244" width="5" height="64" fill="#96AAE6"/><rect x="602" y="231" width="1" height="40" fill="#0808A8"/><rect x="603" y="234" width="1" height="33" fill="#0808A8"/><rect x="604" y="263" width="1" height="40" fill="#0808A8"/><rect x="605" y="287" width="1" height="32" fill="#0808A8"/><rect x="606" y="283" width="1" height="31" fill="#0808A8"/><rect x="603" y="277" width="3" height="1" fill="#0808A8"/><rect x="607" y="245" width="5" height="63" fill="#96AAE6"/><rect x="607" y="232" width="1" height="39" fill="#0808A8"/><rect x="608" y="235" width="1" height="32" fill="#0808A8"/><rect x="609" y="263" width="1" height="40" fill="#0808A8"/><rect x="610" y="287" width="1" height="33" fill="#0808A8"/><rect x="611" y="283" width="1" height="32" fill="#0808A8"/><rect x="608" y="277" width="3" height="1" fill="#0808A8"/><rect x="612" y="244" width="5" height="61" fill="#96AAE6"/><rect x="612" y="231" width="1" height="40" fill="#0808A8"/><rect x="613" y="234" width="1" height="33" fill="#0808A8"/><rect x="614" y="263" width="1" height="40" fill="#0808A8"/><rect x="615" y="287" width="1" height="29" fill="#0808A8"/><rect x="616" y="283" width="1" height="28" fill="#0808A8"/><rect x="613" y="277" width="3" height="1" fill="#0808A8"/><rect x="617" y="245" width="5" height="62" fill="#96AAE6"/><rect x="617" y="233" width="1" height="38" fill="#0808A8"/><rect x="618" y="236" width="1" height="31" fill="#0808A8"/><rect x="619" y="263" width="1" height="40" fill="#0808A8"/><rect x="620" y="287" width="1" height="33" fill="#0808A8"/><rect x="621" y="283" width="1" height="32" fill="#0808A8"/><rect x="618" y="277" width="3" height="1" fill="#0808A8"/><rect x="622" y="247" width="5" height="60" fill="#96AAE6"/><rect x="622" y="235" width="1" height="36" fill="#0808A8"/><rect x="623" y="238" width="1" height="29" fill="#0808A8"/><rect x="624" y="263" width="1" height="40" fill="#0808A8"/><rect x="625" y="287" width="1" height="31" fill="#0808A8"/><rect x="626" y="283" width="1" height="30" fill="#0808A8"/><rect x="623" y="277" width="3" height="1" fill="#0808A8"/><rect x="627" y="247" width="5" height="58" fill="#96AAE6"/><rect x="627" y="236" width="1" height="35" fill="#0808A8"/><rect x="628" y="239" width="1" height="28" fill="#0808A8"/><rect x="629" y="263" width="1" height="40" fill="#0808A8"/><rect x="630" y="287" width="1" height="30" fill="#0808A8"/><rect x="631" y="283" width="1" height="29" fill="#0808A8"/><rect x="628" y="277" width="3" height="1" fill="#0808A8"/><rect x="632" y="246" width="5" height="59" fill="#96AAE6"/><rect x="632" y="234" width="1" height="37" fill="#0808A8"/><rect x="633" y="237" width="1" height="30" fill="#0808A8"/><rect x="634" y="263" width="1" height="40" fill="#0808A8"/><rect x="635" y="287" width="1" height="29" fill="#0808A8"/><rect x="636" y="283" width="1" height="28" fill="#0808A8"/><rect x="633" y="277" width="3" height="1" fill="#0808A8"/><rect x="637" y="247" width="5" height="62" fill="#96AAE6"/><rect x="637" y="235" width="1" height="36" fill="#0808A8"/><rect x="638" y="238" width="1" height="29" fill="#0808A8"/><rect x="639" y="263" width="1" height="40" fill="#0808A8"/><rect x="640" y="287" width="1" height="34" fill="#0808A8"/><rect x="641" y="283" width="1" height="33" fill="#0808A8"/><rect x="638" y="277" width="3" height="1" fill="#0808A8"/><rect x="642" y="258" width="5" height="37" fill="#96AAE6"/><rect x="642" y="251" width="1" height="23" fill="#0808A8"/><rect x="643" y="254" width="1" height="17" fill="#0808A8"/><rect x="644" y="269" width="1" height="24" fill="#0808A8"/><rect x="645" y="283" width="1" height="19" fill="#0808A8"/><rect x="646" y="281" width="1" height="16" fill="#0808A8"/><rect x="643" y="277" width="3" height="1" fill="#0808A8"/><rect x="649" y="270" width="1" height="14" fill="#0808A8"/><rect x="653" y="273" width="1" height="8" fill="#0808A8"/><rect x="668" y="259" width="5" height="35" fill="#96AAE6"/><rect x="668" y="252" width="1" height="22" fill="#0808A8"/><rect x="669" y="255" width="1" height="17" fill="#0808A8"/><rect x="670" y="269" width="1" height="22" fill="#0808A8"/><rect x="671" y="282" width="1" height="18" fill="#0808A8"/><rect x="672" y="280" width="1" height="15" fill="#0808A8"/><rect x="669" y="277" width="3" height="1" fill="#0808A8"/><rect x="673" y="247" width="5" height="57" fill="#96AAE6"/><rect x="673" y="236" width="1" height="36" fill="#0808A8"/><rect x="674" y="239" width="1" height="29" fill="#0808A8"/><rect x="675" y="264" width="1" height="36" fill="#0808A8"/><rect x="676" y="286" width="1" height="29" fill="#0808A8"/><rect x="677" y="282" width="1" height="28" fill="#0808A8"/><rect x="674" y="277" width="3" height="1" fill="#0808A8"/><rect x="678" y="245" width="5" height="61" fill="#96AAE6"/><rect x="678" y="232" width="1" height="39" fill="#0808A8"/><rect x="679" y="235" width="1" height="32" fill="#0808A8"/><rect x="680" y="263" width="1" height="40" fill="#0808A8"/><rect x="681" y="287" width="1" height="29" fill="#0808A8"/><rect x="682" y="283" width="1" height="28" fill="#0808A8"/><rect x="679" y="277" width="3" height="1" fill="#0808A8"/><rect x="683" y="245" width="5" height="62" fill="#96AAE6"/><rect x="683" y="233" width="1" height="38" fill="#0808A8"/><rect x="684" y="236" width="1" height="31" fill="#0808A8"/><rect x="685" y="263" width="1" height="40" fill="#0808A8"/><rect x="686" y="287" width="1" height="33" fill="#0808A8"/><rect x="687" y="283" width="1" height="32" fill="#0808A8"/><rect x="684" y="277" width="3" height="1" fill="#0808A8"/><rect x="688" y="247" width="5" height="61" fill="#96AAE6"/><rect x="688" y="236" width="1" height="35" fill="#0808A8"/><rect x="689" y="239" width="1" height="28" fill="#0808A8"/><rect x="690" y="263" width="1" height="40" fill="#0808A8"/><rect x="691" y="287" width="1" height="34" fill="#0808A8"/><rect x="692" y="283" width="1" height="33" fill="#0808A8"/><rect x="689" y="277" width="3" height="1" fill="#0808A8"/><rect x="693" y="247" width="5" height="60" fill="#96AAE6"/><rect x="693" y="235" width="1" height="36" fill="#0808A8"/><rect x="694" y="238" width="1" height="29" fill="#0808A8"/><rect x="695" y="263" width="1" height="40" fill="#0808A8"/><rect x="696" y="287" width="1" height="31" fill="#0808A8"/><rect x="697" y="283" width="1" height="30" fill="#0808A8"/><rect x="694" y="277" width="3" height="1" fill="#0808A8"/><rect x="698" y="247" width="5" height="60" fill="#96AAE6"/><rect x="698" y="235" width="1" height="36" fill="#0808A8"/><rect x="699" y="238" width="1" height="29" fill="#0808A8"/><rect x="700" y="263" width="1" height="40" fill="#0808A8"/><rect x="701" y="287" width="1" height="31" fill="#0808A8"/><rect x="702" y="283" width="1" height="30" fill="#0808A8"/><rect x="699" y="277" width="3" height="1" fill="#0808A8"/><rect x="703" y="245" width="5" height="60" fill="#96AAE6"/><rect x="703" y="233" width="1" height="38" fill="#0808A8"/><rect x="704" y="236" width="1" height="31" fill="#0808A8"/><rect x="705" y="263" width="1" height="40" fill="#0808A8"/><rect x="706" y="287" width="1" height="29" fill="#0808A8"/><rect x="707" y="283" width="1" height="28" fill="#0808A8"/><rect x="704" y="277" width="3" height="1" fill="#0808A8"/><rect x="708" y="244" width="5" height="63" fill="#96AAE6"/><rect x="708" y="231" width="1" height="40" fill="#0808A8"/><rect x="709" y="234" width="1" height="33" fill="#0808A8"/><rect x="710" y="263" width="1" height="40" fill="#0808A8"/><rect x="711" y="287" width="1" height="31" fill="#0808A8"/><rect x="712" y="283" width="1" height="30" fill="#0808A8"/><rect x="709" y="277" width="3" height="1" fill="#0808A8"/><rect x="713" y="246" width="5" height="62" fill="#96AAE6"/><rect x="713" y="233" width="1" height="38" fill="#0808A8"/><rect x="714" y="236" width="1" height="31" fill="#0808A8"/><rect x="715" y="263" width="1" height="40" fill="#0808A8"/><rect x="716" y="287" width="1" height="32" fill="#0808A8"/><rect x="717" y="283" width="1" height="31" fill="#0808A8"/><rect x="714" y="277" width="3" height="1" fill="#0808A8"/><rect x="718" y="246" width="5" height="60" fill="#96AAE6"/><rect x="718" y="234" width="1" height="37" fill="#0808A8"/><rect x="719" y="237" width="1" height="30" fill="#0808A8"/><rect x="720" y="263" width="1" height="40" fill="#0808A8"/><rect x="721" y="287" width="1" height="30" fill="#0808A8"/><rect x="722" y="283" width="1" height="29" fill="#0808A8"/><rect x="719" y="277" width="3" height="1" fill="#0808A8"/><rect x="723" y="258" width="5" height="37" fill="#96AAE6"/><rect x="723" y="250" width="1" height="23" fill="#0808A8"/><rect x="724" y="253" width="1" height="18" fill="#0808A8"/><rect x="725" y="269" width="1" height="24" fill="#0808A8"/><rect x="726" y="283" width="1" height="19" fill="#0808A8"/><rect x="727" y="281" width="1" height="16" fill="#0808A8"/><rect x="724" y="277" width="3" height="1" fill="#0808A8"/><rect x="731" y="270" width="1" height="14" fill="#0808A8"/><rect x="735" y="273" width="1" height="8" fill="#0808A8"/><rect x="865" y="260" width="5" height="34" fill="#96AAE6"/><rect x="865" y="254" width="1" height="20" fill="#0808A8"/><rect x="866" y="257" width="1" height="15" fill="#0808A8"/><rect x="867" y="269" width="1" height="22" fill="#0808A8"/><rect x="868" y="282" width="1" height="18" fill="#0808A8"/><rect x="869" y="280" width="1" height="15" fill="#0808A8"/><rect x="866" y="277" width="3" height="1" fill="#0808A8"/><rect x="870" y="249" width="5" height="53" fill="#96AAE6"/><rect x="870" y="239" width="1" height="33" fill="#0808A8"/><rect x="871" y="242" width="1" height="26" fill="#0808A8"/><rect x="872" y="264" width="1" height="36" fill="#0808A8"/><rect x="873" y="286" width="1" height="26" fill="#0808A8"/><rect x="874" y="282" width="1" height="25" fill="#0808A8"/><rect x="871" y="277" width="3" height="1" fill="#0808A8"/><rect x="875" y="247" width="5" height="59" fill="#96AAE6"/><rect x="875" y="235" width="1" height="36" fill="#0808A8"/><rect x="876" y="238" width="1" height="29" fill="#0808A8"/><rect x="877" y="263" width="1" height="40" fill="#0808A8"/><rect x="878" y="287" width="1" height="29" fill="#0808A8"/><rect x="879" y="283" width="1" height="28" fill="#0808A8"/><rect x="876" y="277" width="3" height="1" fill="#0808A8"/><rect x="880" y="247" width="5" height="61" fill="#96AAE6"/><rect x="880" y="235" width="1" height="36" fill="#0808A8"/><rect x="881" y="238" width="1" height="29" fill="#0808A8"/><rect x="882" y="263" width="1" height="40" fill="#0808A8"/><rect x="883" y="287" width="1" height="33" fill="#0808A8"/><rect x="884" y="283" width="1" height="32" fill="#0808A8"/><rect x="881" y="277" width="3" height="1" fill="#0808A8"/><rect x="885" y="246" width="5" height="62" fill="#96AAE6"/><rect x="885" y="234" width="1" height="37" fill="#0808A8"/><rect x="886" y="237" width="1" height="30" fill="#0808A8"/><rect x="887" y="263" width="1" height="40" fill="#0808A8"/><rect x="888" y="287" width="1" height="33" fill="#0808A8"/><rect x="889" y="283" width="1" height="32" fill="#0808A8"/><rect x="886" y="277" width="3" height="1" fill="#0808A8"/><rect x="890" y="245" width="5" height="60" fill="#96AAE6"/><rect x="890" y="232" width="1" height="39" fill="#0808A8"/><rect x="891" y="235" width="1" height="32" fill="#0808A8"/><rect x="892" y="263" width="1" height="40" fill="#0808A8"/><rect x="893" y="287" width="1" height="29" fill="#0808A8"/><rect x="894" y="283" width="1" height="28" fill="#0808A8"/><rect x="891" y="277" width="3" height="1" fill="#0808A8"/><rect x="895" y="244" width="5" height="65" fill="#96AAE6"/><rect x="895" y="231" width="1" height="40" fill="#0808A8"/><rect x="896" y="234" width="1" height="33" fill="#0808A8"/><rect x="897" y="263" width="1" height="40" fill="#0808A8"/><rect x="898" y="287" width="1" height="34" fill="#0808A8"/><rect x="899" y="283" width="1" height="33" fill="#0808A8"/><rect x="896" y="277" width="3" height="1" fill="#0808A8"/><rect x="900" y="247" width="5" height="61" fill="#96AAE6"/><rect x="900" y="236" width="1" height="35" fill="#0808A8"/><rect x="901" y="239" width="1" height="28" fill="#0808A8"/><rect x="902" y="263" width="1" height="40" fill="#0808A8"/><rect x="903" y="287" width="1" height="34" fill="#0808A8"/><rect x="904" y="283" width="1" height="33" fill="#0808A8"/><rect x="901" y="277" width="3" height="1" fill="#0808A8"/><rect x="905" y="246" width="5" height="61" fill="#96AAE6"/><rect x="905" y="234" width="1" height="37" fill="#0808A8"/><rect x="906" y="237" width="1" height="30" fill="#0808A8"/><rect x="907" y="263" width="1" height="40" fill="#0808A8"/><rect x="908" y="287" width="1" height="31" fill="#0808A8"/><rect x="909" y="283" width="1" height="30" fill="#0808A8"/><rect x="906" y="277" width="3" height="1" fill="#0808A8"/><rect x="910" y="244" width="5" height="62" fill="#96AAE6"/><rect x="910" y="231" width="1" height="40" fill="#0808A8"/><rect x="911" y="234" width="1" height="33" fill="#0808A8"/><rect x="912" y="263" width="1" height="40" fill="#0808A8"/><rect x="913" y="287" width="1" height="30" fill="#0808A8"/><rect x="914" y="283" width="1" height="29" fill="#0808A8"/><rect x="911" y="277" width="3" height="1" fill="#0808A8"/><rect x="915" y="246" width="5" height="63" fill="#96AAE6"/><rect x="915" y="233" width="1" height="38" fill="#0808A8"/><rect x="916" y="236" width="1" height="31" fill="#0808A8"/><rect x="917" y="263" width="1" height="40" fill="#0808A8"/><rect x="918" y="287" width="1" height="34" fill="#0808A8"/><rect x="919" y="283" width="1" height="33" fill="#0808A8"/><rect x="916" y="277" width="3" height="1" fill="#0808A8"/><rect x="920" y="245" width="5" height="62" fill="#96AAE6"/><rect x="920" y="232" width="1" height="39" fill="#0808A8"/><rect x="921" y="235" width="1" height="32" fill="#0808A8"/><rect x="922" y="263" width="1" height="40" fill="#0808A8"/><rect x="923" y="287" width="1" height="31" fill="#0808A8"/><rect x="924" y="283" width="1" height="30" fill="#0808A8"/><rect x="921" y="277" width="3" height="1" fill="#0808A8"/><rect x="925" y="244" width="5" height="64" fill="#96AAE6"/><rect x="925" y="231" width="1" height="40" fill="#0808A8"/><rect x="926" y="234" width="1" height="33" fill="#0808A8"/><rect x="927" y="263" width="1" height="40" fill="#0808A8"/><rect x="928" y="287" width="1" height="33" fill="#0808A8"/><rect x="929" y="283" width="1" height="32" fill="#0808A8"/><rect x="926" y="277" width="3" height="1" fill="#0808A8"/><rect x="930" y="245" width="5" height="60" fill="#96AAE6"/><rect x="930" y="233" width="1" height="38" fill="#0808A8"/><rect x="931" y="236" width="1" height="31" fill="#0808A8"/><rect x="932" y="263" width="1" height="40" fill="#0808A8"/><rect x="933" y="287" width="1" height="30" fill="#0808A8"/><rect x="934" y="283" width="1" height="29" fill="#0808A8"/><rect x="931" y="277" width="3" height="1" fill="#0808A8"/><rect x="935" y="245" width="5" height="61" fill="#96AAE6"/><rect x="935" y="233" width="1" height="38" fill="#0808A8"/><rect x="936" y="236" width="1" height="31" fill="#0808A8"/><rect x="937" y="263" width="1" height="40" fill="#0808A8"/><rect x="938" y="287" width="1" height="31" fill="#0808A8"/><rect x="939" y="283" width="1" height="30" fill="#0808A8"/><rect x="936" y="277" width="3" height="1" fill="#0808A8"/><rect x="940" y="247" width="5" height="59" fill="#96AAE6"/><rect x="940" y="235" width="1" height="36" fill="#0808A8"/><rect x="941" y="238" width="1" height="29" fill="#0808A8"/><rect x="942" y="263" width="1" height="40" fill="#0808A8"/><rect x="943" y="287" width="1" height="29" fill="#0808A8"/><rect x="944" y="283" width="1" height="28" fill="#0808A8"/><rect x="941" y="277" width="3" height="1" fill="#0808A8"/><rect x="945" y="246" width="5" height="60" fill="#96AAE6"/><rect x="945" y="233" width="1" height="38" fill="#0808A8"/><rect x="946" y="236" width="1" height="31" fill="#0808A8"/><rect x="947" y="263" width="1" height="40" fill="#0808A8"/><rect x="948" y="287" width="1" height="30" fill="#0808A8"/><rect x="949" y="283" width="1" height="29" fill="#0808A8"/><rect x="946" y="277" width="3" height="1" fill="#0808A8"/><rect x="950" y="246" width="5" height="62" fill="#96AAE6"/><rect x="950" y="234" width="1" height="37" fill="#0808A8"/><rect x="951" y="237" width="1" height="30" fill="#0808A8"/><rect x="952" y="263" width="1" height="40" fill="#0808A8"/><rect x="953" y="287" width="1" height="32" fill="#0808A8"/><rect x="954" y="283" width="1" height="31" fill="#0808A8"/><rect x="951" y="277" width="3" height="1" fill="#0808A8"/><rect x="955" y="258" width="5" height="36" fill="#96AAE6"/><rect x="955" y="251" width="1" height="22" fill="#0808A8"/><rect x="956" y="254" width="1" height="17" fill="#0808A8"/><rect x="957" y="269" width="1" height="24" fill="#0808A8"/><rect x="958" y="283" width="1" height="18" fill="#0808A8"/><rect x="959" y="281" width="1" height="16" fill="#0808A8"/><rect x="956" y="277" width="3" height="1" fill="#0808A8"/><rect x="959" y="270" width="1" height="14" fill="#0808A8"/><rect x="963" y="273" width="1" height="8" fill="#0808A8"/><rect x="978" y="260" width="5" height="34" fill="#96AAE6"/><rect x="978" y="253" width="1" height="21" fill="#0808A8"/><rect x="979" y="256" width="1" height="16" fill="#0808A8"/><rect x="980" y="269" width="1" height="22" fill="#0808A8"/><rect x="981" y="282" width="1" height="17" fill="#0808A8"/><rect x="982" y="280" width="1" height="14" fill="#0808A8"/><rect x="979" y="277" width="3" height="1" fill="#0808A8"/><rect x="983" y="248" width="5" height="56" fill="#96AAE6"/><rect x="983" y="237" width="1" height="35" fill="#0808A8"/><rect x="984" y="240" width="1" height="28" fill="#0808A8"/><rect x="985" y="264" width="1" height="36" fill="#0808A8"/><rect x="986" y="286" width="1" height="28" fill="#0808A8"/><rect x="987" y="282" width="1" height="27" fill="#0808A8"/><rect x="984" y="277" width="3" height="1" fill="#0808A8"/><rect x="988" y="244" width="5" height="65" fill="#96AAE6"/><rect x="988" y="231" width="1" height="40" fill="#0808A8"/><rect x="989" y="234" width="1" height="33" fill="#0808A8"/><rect x="990" y="263" width="1" height="40" fill="#0808A8"/><rect x="991" y="287" width="1" height="34" fill="#0808A8"/><rect x="992" y="283" width="1" height="33" fill="#0808A8"/><rect x="989" y="277" width="3" height="1" fill="#0808A8"/><rect x="993" y="245" width="5" height="61" fill="#96AAE6"/><rect x="993" y="232" width="1" height="39" fill="#0808A8"/><rect x="994" y="235" width="1" height="32" fill="#0808A8"/><rect x="995" y="263" width="1" height="40" fill="#0808A8"/><rect x="996" y="287" width="1" height="30" fill="#0808A8"/><rect x="997" y="283" width="1" height="29" fill="#0808A8"/><rect x="994" y="277" width="3" height="1" fill="#0808A8"/><rect x="998" y="247" width="5" height="61" fill="#96AAE6"/><rect x="998" y="235" width="1" height="36" fill="#0808A8"/><rect x="999" y="238" width="1" height="29" fill="#0808A8"/><rect x="1000" y="263" width="1" height="40" fill="#0808A8"/><rect x="1001" y="287" width="1" height="33" fill="#0808A8"/><rect x="1002" y="283" width="1" height="32" fill="#0808A8"/><rect x="999" y="277" width="3" height="1" fill="#0808A8"/><rect x="1003" y="245" width="5" height="63" fill="#96AAE6"/><rect x="1003" y="232" width="1" height="39" fill="#0808A8"/><rect x="1004" y="235" width="1" height="32" fill="#0808A8"/><rect x="1005" y="263" width="1" height="40" fill="#0808A8"/><rect x="1006" y="287" width="1" height="32" fill="#0808A8"/><rect x="1007" y="283" width="1" height="31" fill="#0808A8"/><rect x="1004" y="277" width="3" height="1" fill="#0808A8"/><rect x="1008" y="246" width="5" height="60" fill="#96AAE6"/><rect x="1008" y="234" width="1" height="37" fill="#0808A8"/><rect x="1009" y="237" width="1" height="30" fill="#0808A8"/><rect x="1010" y="263" width="1" height="40" fill="#0808A8"/><rect x="1011" y="287" width="1" height="30" fill="#0808A8"/><rect x="1012" y="283" width="1" height="29" fill="#0808A8"/><rect x="1009" y="277" width="3" height="1" fill="#0808A8"/><rect x="1013" y="245" width="5" height="62" fill="#96AAE6"/><rect x="1013" y="233" width="1" height="38" fill="#0808A8"/><rect x="1014" y="236" width="1" height="31" fill="#0808A8"/><rect x="1015" y="263" width="1" height="40" fill="#0808A8"/><rect x="1016" y="287" width="1" height="32" fill="#0808A8"/><rect x="1017" y="283" width="1" height="31" fill="#0808A8"/><rect x="1014" y="277" width="3" height="1" fill="#0808A8"/><rect x="1018" y="245" width="5" height="62" fill="#96AAE6"/><rect x="1018" y="233" width="1" height="38" fill="#0808A8"/><rect x="1019" y="236" width="1" height="31" fill="#0808A8"/><rect x="1020" y="263" width="1" height="40" fill="#0808A8"/><rect x="1021" y="287" width="1" height="32" fill="#0808A8"/><rect x="1022" y="283" width="1" height="31" fill="#0808A8"/><rect x="1019" y="277" width="3" height="1" fill="#0808A8"/><rect x="1023" y="245" width="5" height="61" fill="#96AAE6"/><rect x="1023" y="232" width="1" height="39" fill="#0808A8"/><rect x="1024" y="235" width="1" height="32" fill="#0808A8"/><rect x="1025" y="263" width="1" height="40" fill="#0808A8"/><rect x="1026" y="287" width="1" height="30" fill="#0808A8"/><rect x="1027" y="283" width="1" height="29" fill="#0808A8"/><rect x="1024" y="277" width="3" height="1" fill="#0808A8"/><rect x="1028" y="247" width="5" height="62" fill="#96AAE6"/><rect x="1028" y="235" width="1" height="36" fill="#0808A8"/><rect x="1029" y="238" width="1" height="29" fill="#0808A8"/><rect x="1030" y="263" width="1" height="40" fill="#0808A8"/><rect x="1031" y="287" width="1" height="34" fill="#0808A8"/><rect x="1032" y="283" width="1" height="33" fill="#0808A8"/><rect x="1029" y="277" width="3" height="1" fill="#0808A8"/><rect x="1033" y="244" width="5" height="64" fill="#96AAE6"/><rect x="1033" y="231" width="1" height="40" fill="#0808A8"/><rect x="1034" y="234" width="1" height="33" fill="#0808A8"/><rect x="1035" y="263" width="1" height="40" fill="#0808A8"/><rect x="1036" y="287" width="1" height="33" fill="#0808A8"/><rect x="1037" y="283" width="1" height="32" fill="#0808A8"/><rect x="1034" y="277" width="3" height="1" fill="#0808A8"/><rect x="1038" y="259" width="5" height="35" fill="#96AAE6"/><rect x="1038" y="252" width="1" height="21" fill="#0808A8"/><rect x="1039" y="255" width="1" height="16" fill="#0808A8"/><rect x="1040" y="269" width="1" height="24" fill="#0808A8"/><rect x="1041" y="283" width="1" height="18" fill="#0808A8"/><rect x="1042" y="281" width="1" height="15" fill="#0808A8"/><rect x="1039" y="277" width="3" height="1" fill="#0808A8"/><rect x="1043" y="270" width="1" height="14" fill="#0808A8"/><rect x="1047" y="273" width="1" height="8" fill="#0808A8"/><rect x="1063" y="260" width="5" height="33" fill="#96AAE6"/><rect x="1063" y="254" width="1" height="20" fill="#0808A8"/><rect x="1064" y="257" width="1" height="15" fill="#0808A8"/><rect x="1065" y="269" width="1" height="22" fill="#0808A8"/><rect x="1066" y="282" width="1" height="17" fill="#0808A8"/><rect x="1067" y="280" width="1" height="14" fill="#0808A8"/><rect x="1064" y="277" width="3" height="1" fill="#0808A8"/><rect x="1068" y="248" width="5" height="54" fill="#96AAE6"/><rect x="1068" y="237" width="1" height="34" fill="#0808A8"/><rect x="1069" y="240" width="1" height="28" fill="#0808A8"/><rect x="1070" y="264" width="1" height="36" fill="#0808A8"/><rect x="1071" y="286" width="1" height="27" fill="#0808A8"/><rect x="1072" y="282" width="1" height="25" fill="#0808A8"/><rect x="1069" y="277" width="3" height="1" fill="#0808A8"/><rect x="1073" y="246" width="5" height="60" fill="#96AAE6"/><rect x="1073" y="233" width="1" height="38" fill="#0808A8"/><rect x="1074" y="236" width="1" height="31" fill="#0808A8"/><rect x="1075" y="263" width="1" height="40" fill="#0808A8"/><rect x="1076" y="287" width="1" height="29" fill="#0808A8"/><rect x="1077" y="283" width="1" height="28" fill="#0808A8"/><rect x="1074" y="277" width="3" height="1" fill="#0808A8"/><rect x="1078" y="247" width="5" height="60" fill="#96AAE6"/><rect x="1078" y="236" width="1" height="35" fill="#0808A8"/><rect x="1079" y="239" width="1" height="28" fill="#0808A8"/><rect x="1080" y="263" width="1" height="40" fill="#0808A8"/><rect x="1081" y="287" width="1" height="32" fill="#0808A8"/><rect x="1082" y="283" width="1" height="31" fill="#0808A8"/><rect x="1079" y="277" width="3" height="1" fill="#0808A8"/><rect x="1083" y="245" width="5" height="62" fill="#96AAE6"/><rect x="1083" y="233" width="1" height="38" fill="#0808A8"/><rect x="1084" y="236" width="1" height="31" fill="#0808A8"/><rect x="1085" y="263" width="1" height="40" fill="#0808A8"/><rect x="1086" y="287" width="1" height="32" fill="#0808A8"/><rect x="1087" y="283" width="1" height="31" fill="#0808A8"/><rect x="1084" y="277" width="3" height="1" fill="#0808A8"/><rect x="1088" y="246" width="5" height="61" fill="#96AAE6"/><rect x="1088" y="234" width="1" height="37" fill="#0808A8"/><rect x="1089" y="237" width="1" height="30" fill="#0808A8"/><rect x="1090" y="263" width="1" height="40" fill="#0808A8"/><rect x="1091" y="287" width="1" height="31" fill="#0808A8"/><rect x="1092" y="283" width="1" height="30" fill="#0808A8"/><rect x="1089" y="277" width="3" height="1" fill="#0808A8"/><rect x="1093" y="247" width="5" height="60" fill="#96AAE6"/><rect x="1093" y="235" width="1" height="36" fill="#0808A8"/><rect x="1094" y="238" width="1" height="29" fill="#0808A8"/><rect x="1095" y="263" width="1" height="40" fill="#0808A8"/><rect x="1096" y="287" width="1" height="31" fill="#0808A8"/><rect x="1097" y="283" width="1" height="30" fill="#0808A8"/><rect x="1094" y="277" width="3" height="1" fill="#0808A8"/><rect x="1098" y="245" width="5" height="63" fill="#96AAE6"/><rect x="1098" y="232" width="1" height="39" fill="#0808A8"/><rect x="1099" y="235" width="1" height="32" fill="#0808A8"/><rect x="1100" y="263" width="1" height="40" fill="#0808A8"/><rect x="1101" y="287" width="1" height="33" fill="#0808A8"/><rect x="1102" y="283" width="1" height="32" fill="#0808A8"/><rect x="1099" y="277" width="3" height="1" fill="#0808A8"/><rect x="1103" y="247" width="5" height="58" fill="#96AAE6"/><rect x="1103" y="236" width="1" height="35" fill="#0808A8"/><rect x="1104" y="239" width="1" height="28" fill="#0808A8"/><rect x="1105" y="263" width="1" height="40" fill="#0808A8"/><rect x="1106" y="287" width="1" height="30" fill="#0808A8"/><rect x="1107" y="283" width="1" height="29" fill="#0808A8"/><rect x="1104" y="277" width="3" height="1" fill="#0808A8"/><rect x="1108" y="245" width="5" height="63" fill="#96AAE6"/><rect x="1108" y="232" width="1" height="39" fill="#0808A8"/><rect x="1109" y="235" width="1" height="32" fill="#0808A8"/><rect x="1110" y="263" width="1" height="40" fill="#0808A8"/><rect x="1111" y="287" width="1" height="32" fill="#0808A8"/><rect x="1112" y="283" width="1" height="31" fill="#0808A8"/><rect x="1109" y="277" width="3" height="1" fill="#0808A8"/><rect x="1113" y="245" width="5" height="61" fill="#96AAE6"/><rect x="1113" y="232" width="1" height="39" fill="#0808A8"/><rect x="1114" y="235" width="1" height="32" fill="#0808A8"/><rect x="1115" y="263" width="1" height="40" fill="#0808A8"/><rect x="1116" y="287" width="1" height="30" fill="#0808A8"/><rect x="1117" y="283" width="1" height="29" fill="#0808A8"/><rect x="1114" y="277" width="3" height="1" fill="#0808A8"/><rect x="1118" y="246" width="5" height="60" fill="#96AAE6"/><rect x="1118" y="234" width="1" height="37" fill="#0808A8"/><rect x="1119" y="237" width="1" height="30" fill="#0808A8"/><rect x="1120" y="263" width="1" height="40" fill="#0808A8"/><rect x="1121" y="287" width="1" height="30" fill="#0808A8"/><rect x="1122" y="283" width="1" height="29" fill="#0808A8"/><rect x="1119" y="277" width="3" height="1" fill="#0808A8"/><rect x="1123" y="258" width="5" height="37" fill="#96AAE6"/><rect x="1123" y="250" width="1" height="23" fill="#0808A8"/><rect x="1124" y="253" width="1" height="18" fill="#0808A8"/><rect x="1125" y="269" width="1" height="24" fill="#0808A8"/><rect x="1126" y="283" width="1" height="19" fill="#0808A8"/><rect x="1127" y="281" width="1" height="16" fill="#0808A8"/><rect x="1124" y="277" width="3" height="1" fill="#0808A8"/><rect x="1127" y="270" width="1" height="14" fill="#0808A8"/><rect x="1131" y="273" width="1" height="8" fill="#0808A8"/><rect x="1261" y="244" width="1" height="46" fill="#0808A8"/><rect x="1262" y="252" width="1" height="32" fill="#5030B0"/>
<rect x="571" y="104" width="1" height="388" fill="#7E4036"/>
<rect x="920" y="104" width="1" height="388" fill="#7E4036"/>
<text x="576" y="131" font-size="11" font-weight="400" fill="#000" stroke="#000" stroke-width="0.1" text-anchor="start" >640 mA</text>
<text x="925" y="131" font-size="11" font-weight="400" fill="#000" stroke="#000" stroke-width="0.1" text-anchor="start" >-3,168 A</text>
<text x="925" y="144" font-size="11" font-weight="400" fill="#000" stroke="#000" stroke-width="0.1" text-anchor="start" >1 сек. 398 мсек.</text>
<rect x="868.5" y="147.5" width="395" height="260" fill="none" stroke="#E02828" stroke-width="1"/>
<rect x="359" y="536" width="144" height="1" fill="#5F8E66"/>
<rect x="359" y="536" width="1" height="20" fill="#5F8E66"/>
<rect x="359" y="555" width="144" height="1" fill="#C8EACC"/>
<rect x="502" y="536" width="1" height="20" fill="#C8EACC"/>
<rect x="360" y="537" width="142" height="18" fill="#000"/>
<rect x="361" y="538" width="140" height="16" fill="#A3C8A9"/>
<rect x="362" y="539" width="125" height="14" fill="#5A9A68"/>
<rect x="362.5" y="539.5" width="124" height="13" fill="none" stroke="#E8FFE8" stroke-width="1" stroke-dasharray="1 1"/>
<text x="364" y="550" font-size="11" font-weight="400" fill="#E8FFE8" stroke="#E8FFE8" stroke-width="0.1" text-anchor="start" >Короткий интервал</text>
<rect x="487" y="538" width="14" height="16" fill="#B0D4B6"/>
<rect x="487" y="538" width="14" height="1" fill="#C8EACC"/>
<rect x="487" y="538" width="1" height="16" fill="#C8EACC"/>
<path d="M491 545 h6 l-3 3 z" fill="#000"/>
<rect x="220" y="558" width="1054" height="1" fill="#5F8E66"/>
<rect x="220" y="559" width="1054" height="1" fill="#C8EACC"/>
<rect x="230" y="570" width="105" height="1" fill="#C8EACC"/>
<rect x="230" y="570" width="1" height="301" fill="#C8EACC"/>
<rect x="230" y="870" width="105" height="1" fill="#5F8E66"/>
<rect x="263" y="570" width="2" height="301" fill="#000"/>
<rect x="265" y="570" width="1" height="301" fill="#C8EACC"/>
<rect x="299" y="570" width="2" height="301" fill="#000"/>
<rect x="301" y="570" width="1" height="301" fill="#C8EACC"/>
<rect x="335" y="570" width="1" height="303" fill="#000"/>
<rect x="335" y="570" width="775" height="1" fill="#000"/>
<rect x="1109" y="570" width="1" height="303" fill="#000"/>
<rect x="335" y="871" width="775" height="2" fill="#000"/>
<text x="236" y="587" font-size="11" font-weight="400" fill="#000" stroke="#000" stroke-width="0.1" text-anchor="start" >mc</text>
<text x="271" y="587" font-size="11" font-weight="400" fill="#000" stroke="#000" stroke-width="0.1" text-anchor="start" >V</text>
<text x="307" y="587" font-size="11" font-weight="400" fill="#000" stroke="#000" stroke-width="0.1" text-anchor="start" >А</text>
<rect x="260" y="646" width="3" height="1" fill="#000"/>
<rect x="296" y="646" width="3" height="1" fill="#000"/>
<rect x="332" y="646" width="3" height="1" fill="#000"/>
<text x="259" y="651" font-size="11" font-weight="400" fill="#1E8C28" stroke="#1E8C28" stroke-width="0.1" text-anchor="end" >450</text>
<text x="295" y="651" font-size="11" font-weight="400" fill="#DC3C30" stroke="#DC3C30" stroke-width="0.1" text-anchor="end" >50</text>
<text x="331" y="651" font-size="11" font-weight="400" fill="#1428B4" stroke="#1428B4" stroke-width="0.1" text-anchor="end" >30</text>
<rect x="260" y="721" width="3" height="1" fill="#000"/>
<rect x="296" y="721" width="3" height="1" fill="#000"/>
<rect x="332" y="721" width="3" height="1" fill="#000"/>
<text x="259" y="726" font-size="11" font-weight="400" fill="#1E8C28" stroke="#1E8C28" stroke-width="0.1" text-anchor="end" >300</text>
<text x="295" y="726" font-size="11" font-weight="400" fill="#DC3C30" stroke="#DC3C30" stroke-width="0.1" text-anchor="end" >0</text>
<text x="331" y="726" font-size="11" font-weight="400" fill="#1428B4" stroke="#1428B4" stroke-width="0.1" text-anchor="end" >20</text>
<rect x="260" y="796" width="3" height="1" fill="#000"/>
<rect x="296" y="796" width="3" height="1" fill="#000"/>
<rect x="332" y="796" width="3" height="1" fill="#000"/>
<text x="259" y="801" font-size="11" font-weight="400" fill="#1E8C28" stroke="#1E8C28" stroke-width="0.1" text-anchor="end" >150</text>
<text x="295" y="801" font-size="11" font-weight="400" fill="#DC3C30" stroke="#DC3C30" stroke-width="0.1" text-anchor="end" >-50</text>
<text x="331" y="801" font-size="11" font-weight="400" fill="#1428B4" stroke="#1428B4" stroke-width="0.1" text-anchor="end" >10</text>
<path d="M336 646.5 H1109" stroke="#000" stroke-width="1" stroke-dasharray="3 3" fill="none"/>
<path d="M336 796.5 H1109" stroke="#000" stroke-width="1" stroke-dasharray="3 3" fill="none"/>
<path d="M529.5 571 V875" stroke="#000" stroke-width="1" stroke-dasharray="3 3" fill="none"/>
<path d="M722.5 571 V875" stroke="#000" stroke-width="1" stroke-dasharray="3 3" fill="none"/>
<path d="M915.5 571 V875" stroke="#000" stroke-width="1" stroke-dasharray="3 3" fill="none"/>
<rect x="336" y="873" width="1" height="33" fill="#C8EACC"/>
<rect x="336" y="905" width="773" height="1" fill="#5F8E66"/>
<rect x="1108" y="873" width="1" height="33" fill="#5F8E66"/>
<text x="352" y="887" font-size="11" font-weight="400" fill="#000" stroke="#000" stroke-width="0.1" text-anchor="start" >T</text>
<text x="530" y="888" font-size="11" font-weight="400" fill="#000" stroke="#000" stroke-width="0.1" text-anchor="middle" >11:59:56</text>
<text x="723" y="888" font-size="11" font-weight="400" fill="#000" stroke="#000" stroke-width="0.1" text-anchor="middle" >12:00:56</text>
<text x="916" y="888" font-size="11" font-weight="400" fill="#000" stroke="#000" stroke-width="0.1" text-anchor="middle" >12:01:56</text>
<rect x="222" y="906" width="113" height="15" fill="#A8CCAE"/>
<rect x="222" y="906" width="113" height="1" fill="#C8EACC"/>
<rect x="222" y="906" width="1" height="15" fill="#C8EACC"/>
<rect x="222" y="920" width="113" height="1" fill="#5F8E66"/>
<text x="274" y="918" font-size="12" font-weight="700" fill="#000" stroke="#000" stroke-width="0.35" text-anchor="middle" >Код</text>
<rect x="222" y="921" width="113" height="15" fill="#A8CCAE"/>
<rect x="222" y="921" width="113" height="1" fill="#C8EACC"/>
<rect x="222" y="921" width="1" height="15" fill="#C8EACC"/>
<rect x="222" y="935" width="113" height="1" fill="#5F8E66"/>
<text x="274" y="933" font-size="12" font-weight="700" fill="#000" stroke="#000" stroke-width="0.35" text-anchor="middle" >КПТ</text>
<rect x="336" y="907" width="773" height="14" fill="#008000"/>
<rect x="693" y="907" width="14" height="14" fill="#fff"/>
<rect x="768" y="907" width="6" height="14" fill="#fff"/>
<rect x="845" y="907" width="21" height="14" fill="#fff"/>
<rect x="973" y="907" width="5" height="14" fill="#fff"/>
<rect x="1101" y="907" width="8" height="14" fill="#fff"/>
<rect x="336" y="922" width="773" height="13" fill="#000080"/>
<rect x="336" y="935" width="773" height="1" fill="#C8D8F0"/>
<rect x="701" y="922" width="6" height="13" fill="#8C1010"/>
<rect x="859" y="922" width="7" height="13" fill="#8C1010"/>
<svg x="336" y="571" width="773" height="300" viewBox="336 571 773 300" overflow="hidden">
<path d="M336 721.5 H1109" stroke="#D42A20" stroke-width="1.2" fill="none"/>
<g fill="#D22418" shape-rendering="auto"><circle cx="336.0" cy="721.5" r="1.8"/><circle cx="341.1" cy="721.5" r="1.8"/><circle cx="346.2" cy="721.5" r="1.8"/><circle cx="351.3" cy="721.5" r="1.8"/><circle cx="356.4" cy="721.5" r="1.8"/><circle cx="361.5" cy="721.5" r="1.8"/><circle cx="366.6" cy="721.5" r="1.8"/><circle cx="371.7" cy="721.5" r="1.8"/><circle cx="376.8" cy="721.5" r="1.8"/><circle cx="381.9" cy="721.5" r="1.8"/><circle cx="387.0" cy="721.5" r="1.8"/><circle cx="392.1" cy="721.5" r="1.8"/><circle cx="397.2" cy="721.5" r="1.8"/><circle cx="402.3" cy="721.5" r="1.8"/><circle cx="407.4" cy="721.5" r="1.8"/><circle cx="412.5" cy="721.5" r="1.8"/><circle cx="417.6" cy="721.5" r="1.8"/><circle cx="422.7" cy="721.5" r="1.8"/><circle cx="427.8" cy="721.5" r="1.8"/><circle cx="432.9" cy="721.5" r="1.8"/><circle cx="438.0" cy="721.5" r="1.8"/><circle cx="443.1" cy="721.5" r="1.8"/><circle cx="448.2" cy="721.5" r="1.8"/><circle cx="453.3" cy="721.5" r="1.8"/><circle cx="458.4" cy="721.5" r="1.8"/><circle cx="463.5" cy="721.5" r="1.8"/><circle cx="468.6" cy="721.5" r="1.8"/><circle cx="473.7" cy="721.5" r="1.8"/><circle cx="478.8" cy="721.5" r="1.8"/><circle cx="483.9" cy="721.5" r="1.8"/><circle cx="489.0" cy="721.5" r="1.8"/><circle cx="494.1" cy="721.5" r="1.8"/><circle cx="499.2" cy="721.5" r="1.8"/><circle cx="504.3" cy="721.5" r="1.8"/><circle cx="509.4" cy="721.5" r="1.8"/><circle cx="514.5" cy="721.5" r="1.8"/><circle cx="519.6" cy="721.5" r="1.8"/><circle cx="524.7" cy="721.5" r="1.8"/><circle cx="529.8" cy="721.5" r="1.8"/><circle cx="534.9" cy="721.5" r="1.8"/><circle cx="540.0" cy="721.5" r="1.8"/><circle cx="545.1" cy="721.5" r="1.8"/><circle cx="550.2" cy="721.5" r="1.8"/><circle cx="555.3" cy="721.5" r="1.8"/><circle cx="560.4" cy="721.5" r="1.8"/><circle cx="565.5" cy="721.5" r="1.8"/><circle cx="570.6" cy="721.5" r="1.8"/><circle cx="575.7" cy="721.5" r="1.8"/><circle cx="580.8" cy="721.5" r="1.8"/><circle cx="585.9" cy="721.5" r="1.8"/><circle cx="591.0" cy="721.5" r="1.8"/><circle cx="596.1" cy="721.5" r="1.8"/><circle cx="601.2" cy="721.5" r="1.8"/><circle cx="606.3" cy="721.5" r="1.8"/><circle cx="611.4" cy="721.5" r="1.8"/><circle cx="616.5" cy="721.5" r="1.8"/><circle cx="621.6" cy="721.5" r="1.8"/><circle cx="626.7" cy="721.5" r="1.8"/><circle cx="631.8" cy="721.5" r="1.8"/><circle cx="636.9" cy="721.5" r="1.8"/><circle cx="642.0" cy="721.5" r="1.8"/><circle cx="647.1" cy="721.5" r="1.8"/><circle cx="652.2" cy="721.5" r="1.8"/><circle cx="657.3" cy="721.5" r="1.8"/><circle cx="662.4" cy="721.5" r="1.8"/><circle cx="667.5" cy="721.5" r="1.8"/><circle cx="672.6" cy="721.5" r="1.8"/><circle cx="677.7" cy="721.5" r="1.8"/><circle cx="682.8" cy="721.5" r="1.8"/><circle cx="687.9" cy="721.5" r="1.8"/><circle cx="693.0" cy="721.5" r="1.8"/><circle cx="698.1" cy="721.5" r="1.8"/><circle cx="703.2" cy="721.5" r="1.8"/><circle cx="708.3" cy="721.5" r="1.8"/><circle cx="713.4" cy="721.5" r="1.8"/><circle cx="718.5" cy="721.5" r="1.8"/><circle cx="723.6" cy="721.5" r="1.8"/><circle cx="728.7" cy="721.5" r="1.8"/><circle cx="733.8" cy="721.5" r="1.8"/><circle cx="738.9" cy="721.5" r="1.8"/><circle cx="744.0" cy="721.5" r="1.8"/><circle cx="749.1" cy="721.5" r="1.8"/><circle cx="754.2" cy="721.5" r="1.8"/><circle cx="759.3" cy="721.5" r="1.8"/><circle cx="764.4" cy="721.5" r="1.8"/><circle cx="769.5" cy="721.5" r="1.8"/><circle cx="774.6" cy="721.5" r="1.8"/><circle cx="779.7" cy="721.5" r="1.8"/><circle cx="784.8" cy="721.5" r="1.8"/><circle cx="789.9" cy="721.5" r="1.8"/><circle cx="795.0" cy="721.5" r="1.8"/><circle cx="800.1" cy="721.5" r="1.8"/><circle cx="805.2" cy="721.5" r="1.8"/><circle cx="810.3" cy="721.5" r="1.8"/><circle cx="815.4" cy="721.5" r="1.8"/><circle cx="820.5" cy="721.5" r="1.8"/><circle cx="825.6" cy="721.5" r="1.8"/><circle cx="830.7" cy="721.5" r="1.8"/><circle cx="835.8" cy="721.5" r="1.8"/><circle cx="840.9" cy="721.5" r="1.8"/><circle cx="846.0" cy="721.5" r="1.8"/><circle cx="851.1" cy="721.5" r="1.8"/><circle cx="856.2" cy="721.5" r="1.8"/><circle cx="861.3" cy="721.5" r="1.8"/><circle cx="866.4" cy="721.5" r="1.8"/><circle cx="871.5" cy="721.5" r="1.8"/><circle cx="876.6" cy="721.5" r="1.8"/><circle cx="881.7" cy="721.5" r="1.8"/><circle cx="886.8" cy="721.5" r="1.8"/><circle cx="891.9" cy="721.5" r="1.8"/><circle cx="897.0" cy="721.5" r="1.8"/><circle cx="902.1" cy="721.5" r="1.8"/><circle cx="907.2" cy="721.5" r="1.8"/><circle cx="912.3" cy="721.5" r="1.8"/><circle cx="917.4" cy="721.5" r="1.8"/><circle cx="922.5" cy="721.5" r="1.8"/><circle cx="927.6" cy="721.5" r="1.8"/><circle cx="932.7" cy="721.5" r="1.8"/><circle cx="937.8" cy="721.5" r="1.8"/><circle cx="942.9" cy="721.5" r="1.8"/><circle cx="948.0" cy="721.5" r="1.8"/><circle cx="953.1" cy="721.5" r="1.8"/><circle cx="958.2" cy="721.5" r="1.8"/><circle cx="963.3" cy="721.5" r="1.8"/><circle cx="968.4" cy="721.5" r="1.8"/><circle cx="973.5" cy="721.5" r="1.8"/><circle cx="978.6" cy="721.5" r="1.8"/><circle cx="983.7" cy="721.5" r="1.8"/><circle cx="988.8" cy="721.5" r="1.8"/><circle cx="993.9" cy="721.5" r="1.8"/><circle cx="999.0" cy="721.5" r="1.8"/><circle cx="1004.1" cy="721.5" r="1.8"/><circle cx="1009.2" cy="721.5" r="1.8"/><circle cx="1014.3" cy="721.5" r="1.8"/><circle cx="1019.4" cy="721.5" r="1.8"/><circle cx="1024.5" cy="721.5" r="1.8"/><circle cx="1029.6" cy="721.5" r="1.8"/><circle cx="1034.7" cy="721.5" r="1.8"/><circle cx="1039.8" cy="721.5" r="1.8"/><circle cx="1044.9" cy="721.5" r="1.8"/><circle cx="1050.0" cy="721.5" r="1.8"/><circle cx="1055.1" cy="721.5" r="1.8"/><circle cx="1060.2" cy="721.5" r="1.8"/><circle cx="1065.3" cy="721.5" r="1.8"/><circle cx="1070.4" cy="721.5" r="1.8"/><circle cx="1075.5" cy="721.5" r="1.8"/><circle cx="1080.6" cy="721.5" r="1.8"/><circle cx="1085.7" cy="721.5" r="1.8"/><circle cx="1090.8" cy="721.5" r="1.8"/><circle cx="1095.9" cy="721.5" r="1.8"/><circle cx="1101.0" cy="721.5" r="1.8"/><circle cx="1106.1" cy="721.5" r="1.8"/></g>
<polyline points="340.7,820.8 345.6,821.3 350.8,817.6 356.8,820.1 361.7,818.6 366.9,821.3 372.0,818.6 376.9,819.8 381.8,821.3 386.9,816.7 391.8,818.9 397.0,820.8 402.5,819.8 407.7,819.8 412.6,819.8 417.8,819.8 422.6,816.8 427.8,815.3 432.7,817.6 438.0,819.8 443.2,820.1 448.4,819.8 453.6,816.8 458.8,819.8 464.0,819.8 469.2,820.8 474.1,822.0 478.9,821.1 484.1,819.8 489.0,815.3 493.8,820.8 499.0,819.4 505.0,819.4 510.2,820.8 514.9,820.8 520.0,819.2 524.7,819.6 529.7,820.8 534.9,820.8 539.9,818.8 545.1,819.6 550.6,820.8 555.7,820.3 561.1,818.8 565.8,819.6 570.9,818.8 576.0,821.1 581.1,817.7 586.1,819.9 590.8,818.8 596.0,820.8 601.5,817.2 607.0,819.9 612.2,823.0 616.9,819.6 621.9,816.7 626.9,819.9 631.6,818.0 636.8,821.1 641.9,819.2 647.0,819.9 652.4,823.9 657.9,819.6 662.9,816.7 668.1,819.9 672.8,819.2 678.3,819.6 683.0,819.2 688.0,820.3 694.0,452.0 700.7,783.8 706.7,789.7 711.9,790.2 717.1,791.0 722.2,791.0 727.1,791.0 732.8,791.0 737.9,789.7 743.1,786.7 748.1,788.4 752.9,794.5 758.1,793.6 763.3,794.5 768.4,794.8 774.0,785.9 778.8,790.7 784.0,791.0 789.1,791.0 794.3,791.0 799.0,791.9 804.1,791.0 809.0,791.0 814.1,791.0 820.2,791.0 825.3,791.0 830.0,793.6 835.2,793.6 840.3,794.5 845.2,792.8 852.1,792.8 859.5,572.0 865.5,791.0 871.0,791.0 875.9,791.0 881.0,789.7 886.2,791.0 890.9,789.7 896.0,792.8 901.2,792.8 906.7,790.7 911.8,794.0 916.8,792.9 921.9,795.0 927.0,793.7 932.0,793.7 937.1,795.0 942.1,795.7 948.0,790.7 953.1,791.7 958.1,791.7 962.7,795.7 967.7,777.7 972.8,774.8 977.8,790.0 982.9,790.7 989.0,795.0 994.0,791.7 999.4,793.7 1004.1,795.0 1009.2,795.0 1014.2,795.0 1019.3,795.0 1024.3,797.9 1029.7,795.7 1034.8,791.7 1039.8,791.7 1044.9,790.7 1050.0,791.7 1055.0,791.7 1060.1,790.7 1065.1,789.5 1070.2,790.7 1076.1,793.7 1081.1,793.7 1086.2,793.7 1091.2,793.7 1096.3,795.0 1101.3,794.5 1105.0,400.0" fill="none" stroke="#1E7A1E" stroke-width="1.1" shape-rendering="auto"/>
<g fill="#147014" shape-rendering="auto"><circle cx="340.7" cy="820.8" r="2"/><circle cx="345.6" cy="821.3" r="2"/><circle cx="350.8" cy="817.6" r="2"/><circle cx="356.8" cy="820.1" r="2"/><circle cx="361.7" cy="818.6" r="2"/><circle cx="366.9" cy="821.3" r="2"/><circle cx="372.0" cy="818.6" r="2"/><circle cx="376.9" cy="819.8" r="2"/><circle cx="381.8" cy="821.3" r="2"/><circle cx="386.9" cy="816.7" r="2"/><circle cx="391.8" cy="818.9" r="2"/><circle cx="397.0" cy="820.8" r="2"/><circle cx="402.5" cy="819.8" r="2"/><circle cx="407.7" cy="819.8" r="2"/><circle cx="412.6" cy="819.8" r="2"/><circle cx="417.8" cy="819.8" r="2"/><circle cx="422.6" cy="816.8" r="2"/><circle cx="427.8" cy="815.3" r="2"/><circle cx="432.7" cy="817.6" r="2"/><circle cx="438.0" cy="819.8" r="2"/><circle cx="443.2" cy="820.1" r="2"/><circle cx="448.4" cy="819.8" r="2"/><circle cx="453.6" cy="816.8" r="2"/><circle cx="458.8" cy="819.8" r="2"/><circle cx="464.0" cy="819.8" r="2"/><circle cx="469.2" cy="820.8" r="2"/><circle cx="474.1" cy="822.0" r="2"/><circle cx="478.9" cy="821.1" r="2"/><circle cx="484.1" cy="819.8" r="2"/><circle cx="489.0" cy="815.3" r="2"/><circle cx="493.8" cy="820.8" r="2"/><circle cx="499.0" cy="819.4" r="2"/><circle cx="505.0" cy="819.4" r="2"/><circle cx="510.2" cy="820.8" r="2"/><circle cx="514.9" cy="820.8" r="2"/><circle cx="520.0" cy="819.2" r="2"/><circle cx="524.7" cy="819.6" r="2"/><circle cx="529.7" cy="820.8" r="2"/><circle cx="534.9" cy="820.8" r="2"/><circle cx="539.9" cy="818.8" r="2"/><circle cx="545.1" cy="819.6" r="2"/><circle cx="550.6" cy="820.8" r="2"/><circle cx="555.7" cy="820.3" r="2"/><circle cx="561.1" cy="818.8" r="2"/><circle cx="565.8" cy="819.6" r="2"/><circle cx="570.9" cy="818.8" r="2"/><circle cx="576.0" cy="821.1" r="2"/><circle cx="581.1" cy="817.7" r="2"/><circle cx="586.1" cy="819.9" r="2"/><circle cx="590.8" cy="818.8" r="2"/><circle cx="596.0" cy="820.8" r="2"/><circle cx="601.5" cy="817.2" r="2"/><circle cx="607.0" cy="819.9" r="2"/><circle cx="612.2" cy="823.0" r="2"/><circle cx="616.9" cy="819.6" r="2"/><circle cx="621.9" cy="816.7" r="2"/><circle cx="626.9" cy="819.9" r="2"/><circle cx="631.6" cy="818.0" r="2"/><circle cx="636.8" cy="821.1" r="2"/><circle cx="641.9" cy="819.2" r="2"/><circle cx="647.0" cy="819.9" r="2"/><circle cx="652.4" cy="823.9" r="2"/><circle cx="657.9" cy="819.6" r="2"/><circle cx="662.9" cy="816.7" r="2"/><circle cx="668.1" cy="819.9" r="2"/><circle cx="672.8" cy="819.2" r="2"/><circle cx="678.3" cy="819.6" r="2"/><circle cx="683.0" cy="819.2" r="2"/><circle cx="688.0" cy="820.3" r="2"/><circle cx="700.7" cy="783.8" r="2"/><circle cx="706.7" cy="789.7" r="2"/><circle cx="711.9" cy="790.2" r="2"/><circle cx="717.1" cy="791.0" r="2"/><circle cx="722.2" cy="791.0" r="2"/><circle cx="727.1" cy="791.0" r="2"/><circle cx="732.8" cy="791.0" r="2"/><circle cx="737.9" cy="789.7" r="2"/><circle cx="743.1" cy="786.7" r="2"/><circle cx="748.1" cy="788.4" r="2"/><circle cx="752.9" cy="794.5" r="2"/><circle cx="758.1" cy="793.6" r="2"/><circle cx="763.3" cy="794.5" r="2"/><circle cx="768.4" cy="794.8" r="2"/><circle cx="774.0" cy="785.9" r="2"/><circle cx="778.8" cy="790.7" r="2"/><circle cx="784.0" cy="791.0" r="2"/><circle cx="789.1" cy="791.0" r="2"/><circle cx="794.3" cy="791.0" r="2"/><circle cx="799.0" cy="791.9" r="2"/><circle cx="804.1" cy="791.0" r="2"/><circle cx="809.0" cy="791.0" r="2"/><circle cx="814.1" cy="791.0" r="2"/><circle cx="820.2" cy="791.0" r="2"/><circle cx="825.3" cy="791.0" r="2"/><circle cx="830.0" cy="793.6" r="2"/><circle cx="835.2" cy="793.6" r="2"/><circle cx="840.3" cy="794.5" r="2"/><circle cx="845.2" cy="792.8" r="2"/><circle cx="852.1" cy="792.8" r="2"/><circle cx="865.5" cy="791.0" r="2"/><circle cx="871.0" cy="791.0" r="2"/><circle cx="875.9" cy="791.0" r="2"/><circle cx="881.0" cy="789.7" r="2"/><circle cx="886.2" cy="791.0" r="2"/><circle cx="890.9" cy="789.7" r="2"/><circle cx="896.0" cy="792.8" r="2"/><circle cx="901.2" cy="792.8" r="2"/><circle cx="906.7" cy="790.7" r="2"/><circle cx="911.8" cy="794.0" r="2"/><circle cx="916.8" cy="792.9" r="2"/><circle cx="921.9" cy="795.0" r="2"/><circle cx="927.0" cy="793.7" r="2"/><circle cx="932.0" cy="793.7" r="2"/><circle cx="937.1" cy="795.0" r="2"/><circle cx="942.1" cy="795.7" r="2"/><circle cx="948.0" cy="790.7" r="2"/><circle cx="953.1" cy="791.7" r="2"/><circle cx="958.1" cy="791.7" r="2"/><circle cx="962.7" cy="795.7" r="2"/><circle cx="967.7" cy="777.7" r="2"/><circle cx="972.8" cy="774.8" r="2"/><circle cx="977.8" cy="790.0" r="2"/><circle cx="982.9" cy="790.7" r="2"/><circle cx="989.0" cy="795.0" r="2"/><circle cx="994.0" cy="791.7" r="2"/><circle cx="999.4" cy="793.7" r="2"/><circle cx="1004.1" cy="795.0" r="2"/><circle cx="1009.2" cy="795.0" r="2"/><circle cx="1014.2" cy="795.0" r="2"/><circle cx="1019.3" cy="795.0" r="2"/><circle cx="1024.3" cy="797.9" r="2"/><circle cx="1029.7" cy="795.7" r="2"/><circle cx="1034.8" cy="791.7" r="2"/><circle cx="1039.8" cy="791.7" r="2"/><circle cx="1044.9" cy="790.7" r="2"/><circle cx="1050.0" cy="791.7" r="2"/><circle cx="1055.0" cy="791.7" r="2"/><circle cx="1060.1" cy="790.7" r="2"/><circle cx="1065.1" cy="789.5" r="2"/><circle cx="1070.2" cy="790.7" r="2"/><circle cx="1076.1" cy="793.7" r="2"/><circle cx="1081.1" cy="793.7" r="2"/><circle cx="1086.2" cy="793.7" r="2"/><circle cx="1091.2" cy="793.7" r="2"/><circle cx="1096.3" cy="795.0" r="2"/></g>
<polyline points="340.7,845.0 345.6,842.9 350.8,845.0 356.8,843.9 361.7,843.9 366.9,843.9 372.0,842.9 376.9,843.9 381.8,843.9 386.9,843.9 391.8,843.9 397.0,843.9 402.5,842.9 407.7,843.9 412.6,843.9 417.8,841.7 422.6,842.0 427.8,843.2 432.7,840.5 438.0,842.0 443.2,843.2 448.4,842.0 453.6,842.0 458.8,842.9 464.0,842.9 469.2,842.9 474.1,844.1 478.9,841.7 484.1,840.5 489.0,842.0 493.8,840.5 499.0,842.0 505.0,840.5 510.2,842.0 514.9,839.9 520.0,842.3 524.7,841.5 529.7,840.7 534.9,840.7 539.9,840.7 545.1,841.8 550.6,841.8 555.7,841.8 561.1,839.6 565.8,839.9 570.9,840.7 576.0,840.7 581.1,841.2 586.1,838.7 590.8,841.8 596.0,839.9 601.5,841.8 607.0,840.7 612.2,841.8 616.9,841.8 621.9,841.8 626.9,841.8 631.6,841.8 636.8,840.7 641.9,839.6 647.0,841.8 652.4,839.9 657.9,840.7 662.9,841.8 668.1,839.9 672.8,840.7 678.3,840.7 683.0,839.9 688.0,839.9 693.2,841.2 701.0,839.9 706.7,822.9 711.9,825.0 717.1,824.1 722.2,824.1 727.1,820.7 732.8,817.8 737.9,819.0 743.1,817.8 748.1,819.0 752.9,812.6 758.1,816.0 763.3,814.8 768.4,813.8 774.0,820.7 778.8,821.7 784.0,824.1 789.1,822.9 794.3,824.1 799.0,822.9 804.1,821.7 809.0,819.0 814.1,820.7 820.2,820.0 825.3,822.9 830.0,817.8 835.2,817.8 840.3,814.8 845.2,819.0 852.1,819.0 859.0,848.3 865.5,839.0 871.0,837.9 875.9,836.7 881.0,835.9 886.2,837.2 890.9,835.0 896.0,833.8 901.2,832.8 906.7,832.8 911.8,831.6 916.8,830.4 921.9,829.4 927.0,827.7 932.0,826.6 937.1,827.7 942.1,823.7 948.0,823.7 953.1,824.9 958.1,820.7 962.7,818.6 967.7,816.4 972.8,835.0 977.8,833.8 982.9,835.0 989.0,832.8 994.0,831.6 999.4,832.8 1004.1,831.6 1009.2,829.4 1014.2,829.4 1019.3,826.6 1024.3,823.7 1029.7,819.8 1034.8,818.6 1039.8,818.6 1044.9,818.6 1050.0,821.0 1055.0,817.6 1060.1,817.6 1065.1,819.8 1070.2,821.0 1076.1,817.6 1081.1,814.8 1086.2,817.0 1091.2,817.0 1096.3,815.9 1101.3,814.8" fill="none" stroke="#1010C0" stroke-width="1.1" shape-rendering="auto"/>
<g fill="#0000B0" shape-rendering="auto"><circle cx="340.7" cy="845.0" r="2"/><circle cx="345.6" cy="842.9" r="2"/><circle cx="350.8" cy="845.0" r="2"/><circle cx="356.8" cy="843.9" r="2"/><circle cx="361.7" cy="843.9" r="2"/><circle cx="366.9" cy="843.9" r="2"/><circle cx="372.0" cy="842.9" r="2"/><circle cx="376.9" cy="843.9" r="2"/><circle cx="381.8" cy="843.9" r="2"/><circle cx="386.9" cy="843.9" r="2"/><circle cx="391.8" cy="843.9" r="2"/><circle cx="397.0" cy="843.9" r="2"/><circle cx="402.5" cy="842.9" r="2"/><circle cx="407.7" cy="843.9" r="2"/><circle cx="412.6" cy="843.9" r="2"/><circle cx="417.8" cy="841.7" r="2"/><circle cx="422.6" cy="842.0" r="2"/><circle cx="427.8" cy="843.2" r="2"/><circle cx="432.7" cy="840.5" r="2"/><circle cx="438.0" cy="842.0" r="2"/><circle cx="443.2" cy="843.2" r="2"/><circle cx="448.4" cy="842.0" r="2"/><circle cx="453.6" cy="842.0" r="2"/><circle cx="458.8" cy="842.9" r="2"/><circle cx="464.0" cy="842.9" r="2"/><circle cx="469.2" cy="842.9" r="2"/><circle cx="474.1" cy="844.1" r="2"/><circle cx="478.9" cy="841.7" r="2"/><circle cx="484.1" cy="840.5" r="2"/><circle cx="489.0" cy="842.0" r="2"/><circle cx="493.8" cy="840.5" r="2"/><circle cx="499.0" cy="842.0" r="2"/><circle cx="505.0" cy="840.5" r="2"/><circle cx="510.2" cy="842.0" r="2"/><circle cx="514.9" cy="839.9" r="2"/><circle cx="520.0" cy="842.3" r="2"/><circle cx="524.7" cy="841.5" r="2"/><circle cx="529.7" cy="840.7" r="2"/><circle cx="534.9" cy="840.7" r="2"/><circle cx="539.9" cy="840.7" r="2"/><circle cx="545.1" cy="841.8" r="2"/><circle cx="550.6" cy="841.8" r="2"/><circle cx="555.7" cy="841.8" r="2"/><circle cx="561.1" cy="839.6" r="2"/><circle cx="565.8" cy="839.9" r="2"/><circle cx="570.9" cy="840.7" r="2"/><circle cx="576.0" cy="840.7" r="2"/><circle cx="581.1" cy="841.2" r="2"/><circle cx="586.1" cy="838.7" r="2"/><circle cx="590.8" cy="841.8" r="2"/><circle cx="596.0" cy="839.9" r="2"/><circle cx="601.5" cy="841.8" r="2"/><circle cx="607.0" cy="840.7" r="2"/><circle cx="612.2" cy="841.8" r="2"/><circle cx="616.9" cy="841.8" r="2"/><circle cx="621.9" cy="841.8" r="2"/><circle cx="626.9" cy="841.8" r="2"/><circle cx="631.6" cy="841.8" r="2"/><circle cx="636.8" cy="840.7" r="2"/><circle cx="641.9" cy="839.6" r="2"/><circle cx="647.0" cy="841.8" r="2"/><circle cx="652.4" cy="839.9" r="2"/><circle cx="657.9" cy="840.7" r="2"/><circle cx="662.9" cy="841.8" r="2"/><circle cx="668.1" cy="839.9" r="2"/><circle cx="672.8" cy="840.7" r="2"/><circle cx="678.3" cy="840.7" r="2"/><circle cx="683.0" cy="839.9" r="2"/><circle cx="688.0" cy="839.9" r="2"/><circle cx="693.2" cy="841.2" r="2"/><circle cx="701.0" cy="839.9" r="2"/><circle cx="706.7" cy="822.9" r="2"/><circle cx="711.9" cy="825.0" r="2"/><circle cx="717.1" cy="824.1" r="2"/><circle cx="722.2" cy="824.1" r="2"/><circle cx="727.1" cy="820.7" r="2"/><circle cx="732.8" cy="817.8" r="2"/><circle cx="737.9" cy="819.0" r="2"/><circle cx="743.1" cy="817.8" r="2"/><circle cx="748.1" cy="819.0" r="2"/><circle cx="752.9" cy="812.6" r="2"/><circle cx="758.1" cy="816.0" r="2"/><circle cx="763.3" cy="814.8" r="2"/><circle cx="768.4" cy="813.8" r="2"/><circle cx="774.0" cy="820.7" r="2"/><circle cx="778.8" cy="821.7" r="2"/><circle cx="784.0" cy="824.1" r="2"/><circle cx="789.1" cy="822.9" r="2"/><circle cx="794.3" cy="824.1" r="2"/><circle cx="799.0" cy="822.9" r="2"/><circle cx="804.1" cy="821.7" r="2"/><circle cx="809.0" cy="819.0" r="2"/><circle cx="814.1" cy="820.7" r="2"/><circle cx="820.2" cy="820.0" r="2"/><circle cx="825.3" cy="822.9" r="2"/><circle cx="830.0" cy="817.8" r="2"/><circle cx="835.2" cy="817.8" r="2"/><circle cx="840.3" cy="814.8" r="2"/><circle cx="845.2" cy="819.0" r="2"/><circle cx="852.1" cy="819.0" r="2"/><circle cx="859.0" cy="848.3" r="2"/><circle cx="865.5" cy="839.0" r="2"/><circle cx="871.0" cy="837.9" r="2"/><circle cx="875.9" cy="836.7" r="2"/><circle cx="881.0" cy="835.9" r="2"/><circle cx="886.2" cy="837.2" r="2"/><circle cx="890.9" cy="835.0" r="2"/><circle cx="896.0" cy="833.8" r="2"/><circle cx="901.2" cy="832.8" r="2"/><circle cx="906.7" cy="832.8" r="2"/><circle cx="911.8" cy="831.6" r="2"/><circle cx="916.8" cy="830.4" r="2"/><circle cx="921.9" cy="829.4" r="2"/><circle cx="927.0" cy="827.7" r="2"/><circle cx="932.0" cy="826.6" r="2"/><circle cx="937.1" cy="827.7" r="2"/><circle cx="942.1" cy="823.7" r="2"/><circle cx="948.0" cy="823.7" r="2"/><circle cx="953.1" cy="824.9" r="2"/><circle cx="958.1" cy="820.7" r="2"/><circle cx="962.7" cy="818.6" r="2"/><circle cx="967.7" cy="816.4" r="2"/><circle cx="972.8" cy="835.0" r="2"/><circle cx="977.8" cy="833.8" r="2"/><circle cx="982.9" cy="835.0" r="2"/><circle cx="989.0" cy="832.8" r="2"/><circle cx="994.0" cy="831.6" r="2"/><circle cx="999.4" cy="832.8" r="2"/><circle cx="1004.1" cy="831.6" r="2"/><circle cx="1009.2" cy="829.4" r="2"/><circle cx="1014.2" cy="829.4" r="2"/><circle cx="1019.3" cy="826.6" r="2"/><circle cx="1024.3" cy="823.7" r="2"/><circle cx="1029.7" cy="819.8" r="2"/><circle cx="1034.8" cy="818.6" r="2"/><circle cx="1039.8" cy="818.6" r="2"/><circle cx="1044.9" cy="818.6" r="2"/><circle cx="1050.0" cy="821.0" r="2"/><circle cx="1055.0" cy="817.6" r="2"/><circle cx="1060.1" cy="817.6" r="2"/><circle cx="1065.1" cy="819.8" r="2"/><circle cx="1070.2" cy="821.0" r="2"/><circle cx="1076.1" cy="817.6" r="2"/><circle cx="1081.1" cy="814.8" r="2"/><circle cx="1086.2" cy="817.0" r="2"/><circle cx="1091.2" cy="817.0" r="2"/><circle cx="1096.3" cy="815.9" r="2"/><circle cx="1101.3" cy="814.8" r="2"/></g>
</svg>
<rect x="397" y="560" width="1" height="379" fill="#7E4036"/>
<text x="403" y="587" font-size="11" font-weight="400" fill="#000" stroke="#000" stroke-width="0.1" text-anchor="start" >3,588 A</text>
<rect x="1119" y="561" width="154" height="1" fill="#C8EACC"/>
<rect x="1119" y="561" width="1" height="378" fill="#C8EACC"/>
<rect x="1119" y="938" width="154" height="1" fill="#5F8E66"/>
<rect x="1272" y="561" width="1" height="378" fill="#5F8E66"/>
<rect x="1121" y="563" width="150" height="1" fill="#000"/>
<rect x="1121" y="563" width="1" height="190" fill="#000"/>
<rect x="1198" y="563" width="1" height="190" fill="#000"/>
<rect x="1122" y="564" width="76" height="1" fill="#C8EACC"/>
<rect x="1122" y="564" width="1" height="20" fill="#C8EACC"/>
<rect x="1122" y="584" width="76" height="1" fill="#000"/>
<text x="1125" y="578" font-size="12" font-weight="700" fill="#000" stroke="#000" stroke-width="0.35" text-anchor="start" >Т</text>
<text x="1201" y="578" font-size="12" font-weight="700" fill="#000" stroke="#000" stroke-width="0.35" text-anchor="start" >11:59:15</text>
<rect x="1122" y="585" width="76" height="1" fill="#C8EACC"/>
<rect x="1122" y="585" width="1" height="20" fill="#C8EACC"/>
<rect x="1122" y="605" width="76" height="1" fill="#000"/>
<text x="1125" y="599" font-size="12" font-weight="700" fill="#000" stroke="#000" stroke-width="0.35" text-anchor="start" >А</text>
<text x="1201" y="599" font-size="12" font-weight="700" fill="#000" stroke="#000" stroke-width="0.35" text-anchor="start" >3,588 А</text>
<rect x="1122" y="606" width="76" height="1" fill="#C8EACC"/>
<rect x="1122" y="606" width="1" height="20" fill="#C8EACC"/>
<rect x="1122" y="626" width="76" height="1" fill="#000"/>
<text x="1125" y="620" font-size="12" font-weight="700" fill="#000" stroke="#000" stroke-width="0.35" text-anchor="start" >V</text>
<text x="1201" y="620" font-size="12" font-weight="700" fill="#000" stroke="#000" stroke-width="0.35" text-anchor="start" >0,0 км/ч</text>
<rect x="1122" y="627" width="76" height="1" fill="#C8EACC"/>
<rect x="1122" y="627" width="1" height="20" fill="#C8EACC"/>
<rect x="1122" y="647" width="76" height="1" fill="#000"/>
<text x="1125" y="641" font-size="12" font-weight="700" fill="#000" stroke="#000" stroke-width="0.35" text-anchor="start" >КОД</text>
<text x="1201" y="641" font-size="12" font-weight="700" fill="#000" stroke="#000" stroke-width="0.35" text-anchor="start" >Зел.</text>
<rect x="1122" y="648" width="76" height="1" fill="#C8EACC"/>
<rect x="1122" y="648" width="1" height="20" fill="#C8EACC"/>
<rect x="1122" y="668" width="76" height="1" fill="#000"/>
<text x="1125" y="662" font-size="12" font-weight="700" fill="#000" stroke="#000" stroke-width="0.35" text-anchor="start" >КПТ</text>
<text x="1201" y="662" font-size="12" font-weight="700" fill="#000" stroke="#000" stroke-width="0.35" text-anchor="start" >КПТ 5</text>
<rect x="1122" y="669" width="76" height="1" fill="#C8EACC"/>
<rect x="1122" y="669" width="1" height="20" fill="#C8EACC"/>
<rect x="1122" y="689" width="76" height="1" fill="#000"/>
<text x="1125" y="683" font-size="12" font-weight="700" fill="#000" stroke="#000" stroke-width="0.35" text-anchor="start" >Тки</text>
<text x="1201" y="683" font-size="12" font-weight="700" fill="#000" stroke="#000" stroke-width="0.35" text-anchor="start" >100 мс</text>
<rect x="1122" y="690" width="76" height="1" fill="#C8EACC"/>
<rect x="1122" y="690" width="1" height="20" fill="#C8EACC"/>
<rect x="1122" y="710" width="76" height="1" fill="#000"/>
<text x="1125" y="704" font-size="12" font-weight="700" fill="#000" stroke="#000" stroke-width="0.35" text-anchor="start" >Тц</text>
<text x="1201" y="704" font-size="12" font-weight="700" fill="#000" stroke="#000" stroke-width="0.35" text-anchor="start" >1580 мс</text>
<rect x="1122" y="711" width="76" height="1" fill="#C8EACC"/>
<rect x="1122" y="711" width="1" height="20" fill="#C8EACC"/>
<rect x="1122" y="731" width="76" height="1" fill="#000"/>
<text x="1125" y="725" font-size="12" font-weight="700" fill="#000" stroke="#000" stroke-width="0.35" text-anchor="start" >Метка</text>
<rect x="1122" y="732" width="76" height="1" fill="#C8EACC"/>
<rect x="1122" y="732" width="1" height="20" fill="#C8EACC"/>
<rect x="1122" y="752" width="76" height="1" fill="#000"/>
<text x="1125" y="746" font-size="12" font-weight="700" fill="#000" stroke="#000" stroke-width="0.35" text-anchor="start" >Фильтр</text>
<text x="1201" y="746" font-size="12" font-weight="700" fill="#000" stroke="#000" stroke-width="0.35" text-anchor="start" >50Гц</text>
<rect x="1121" y="752" width="78" height="1" fill="#000"/>
<rect x="1199" y="753" width="72" height="1" fill="#C8EACC"/>
<rect x="1126" y="759" width="12" height="12" fill="#000080"/>
<rect x="1126" y="775" width="12" height="12" fill="#800000"/>
<path d="M1126 792 h13 l-6.5 13 z" fill="#0000F0" shape-rendering="auto"/>
<text x="1150" y="769" font-size="11" font-weight="400" fill="#000" stroke="#000" stroke-width="0.1" text-anchor="start" >КПТ5</text>
<text x="1150" y="786" font-size="11" font-weight="400" fill="#000" stroke="#000" stroke-width="0.1" text-anchor="start" >КПТ7</text>
<text x="1150" y="803" font-size="11" font-weight="400" fill="#000" stroke="#000" stroke-width="0.1" text-anchor="start" >Метка</text>
<rect x="0" y="964" width="98" height="1" fill="#5F8E66"/>
<rect x="0" y="964" width="1" height="18" fill="#5F8E66"/>
<rect x="0" y="981" width="98" height="1" fill="#C8EACC"/>
<rect x="97" y="964" width="1" height="18" fill="#C8EACC"/>
<rect x="99" y="964" width="200" height="1" fill="#5F8E66"/>
<rect x="99" y="964" width="1" height="18" fill="#5F8E66"/>
<rect x="99" y="981" width="200" height="1" fill="#C8EACC"/>
<rect x="298" y="964" width="1" height="18" fill="#C8EACC"/>
<rect x="300" y="964" width="976" height="1" fill="#5F8E66"/>
<rect x="300" y="964" width="1" height="18" fill="#5F8E66"/>
<rect x="300" y="981" width="976" height="1" fill="#C8EACC"/>
<rect x="1275" y="964" width="1" height="18" fill="#C8EACC"/>
<rect x="0" y="983" width="1276" height="1" fill="#C8EACC"/>
<rect x="0" y="986" width="53" height="21" fill="#A3C8A9"/>
<rect x="0" y="986" width="53" height="1" fill="#C8EACC"/>
<rect x="0" y="986" width="1" height="21" fill="#C8EACC"/>
<rect x="0" y="1006" width="53" height="1" fill="#000"/>
<rect x="52" y="986" width="1" height="21" fill="#000"/>
<g shape-rendering="auto"><path d="M5 993 q3 -2 6 0 v5 q-3 -2 -6 0 z" fill="#E86020"/><path d="M12 993 q3 2 6 0 v5 q-3 2 -6 0 z" fill="#60B030"/><path d="M4 999 q3 -2 6 0 v5 q-3 -2 -6 0 z" fill="#3070D0"/><path d="M11 999 q3 2 6 0 v5 q-3 2 -6 0 z" fill="#F0C020"/></g>
<text x="21" y="1002" font-size="12" font-weight="700" fill="#000" stroke="#000" stroke-width="0.35" text-anchor="start" >Пуск</text>
<defs><pattern id="dith" width="2" height="2" patternUnits="userSpaceOnUse"><rect width="2" height="2" fill="#B8D8BE"/><rect width="1" height="1" fill="#D8ECDB"/><rect x="1" y="1" width="1" height="1" fill="#D8ECDB"/></pattern></defs>
<rect x="58" y="986" width="160" height="21" fill="url(#dith)"/>
<rect x="58" y="986" width="160" height="1" fill="#000"/>
<rect x="58" y="986" width="1" height="21" fill="#000"/>
<rect x="59" y="987" width="158" height="1" fill="#5F8E66"/>
<rect x="59" y="987" width="1" height="20" fill="#5F8E66"/>
<rect x="217" y="986" width="1" height="21" fill="#C8EACC"/>
<rect x="63" y="990" width="3" height="15" fill="#202080"/>
<rect x="67" y="990" width="5" height="15" fill="#909090"/>
<rect x="72" y="990" width="7" height="10" fill="#101090"/>
<rect x="72" y="1000" width="7" height="5" fill="#A0A0A0"/>
<text x="84" y="1002" font-size="12" font-weight="700" fill="#000" stroke="#000" stroke-width="0.35" text-anchor="start" textLength="71" lengthAdjust="spacing">Registralsn</text>
<rect x="1176" y="986" width="100" height="1" fill="#5F8E66"/>
<rect x="1176" y="986" width="1" height="21" fill="#5F8E66"/>
<rect x="1176" y="1006" width="100" height="1" fill="#C8EACC"/>
<rect x="1275" y="986" width="1" height="21" fill="#C8EACC"/>
<rect x="1160" y="990" width="12" height="15" fill="#5A9A68"/>
<svg x="1160" y="986" width="12" height="21" overflow="hidden">
<text x="1" y="16" font-size="11" font-weight="400" fill="#fff" stroke="#fff" stroke-width="0.1" text-anchor="start" >EN</text>
</svg>
<text x="1181" y="1002" font-size="13" font-weight="700" fill="#000" stroke="#000" stroke-width="0.35" text-anchor="start" >«</text>
<g shape-rendering="auto"><rect x="1199" y="990" width="8" height="8" fill="#70B8F0" rx="2"/><rect x="1193" y="995" width="9" height="9" fill="#90C8F8" rx="2"/><rect x="1197" y="998" width="5" height="5" fill="#D0E8FF"/></g>
<g shape-rendering="auto"><path d="M1212 991 h4 l3 5 l3 -5 h4 l-5 7 l5 7 h-4 l-3 -4 l-3 4 h-4 z" fill="#F01010" stroke="#fff" stroke-width="0.6"/><path d="M1219 998 l6 6 M1222 1004 h3 v-3" stroke="#000" stroke-width="2" fill="none"/></g>
<text x="1240" y="1003" font-size="12" font-weight="400" fill="#000" stroke="#000" stroke-width="0.1" text-anchor="start" >9:16</text></svg></body></html>
